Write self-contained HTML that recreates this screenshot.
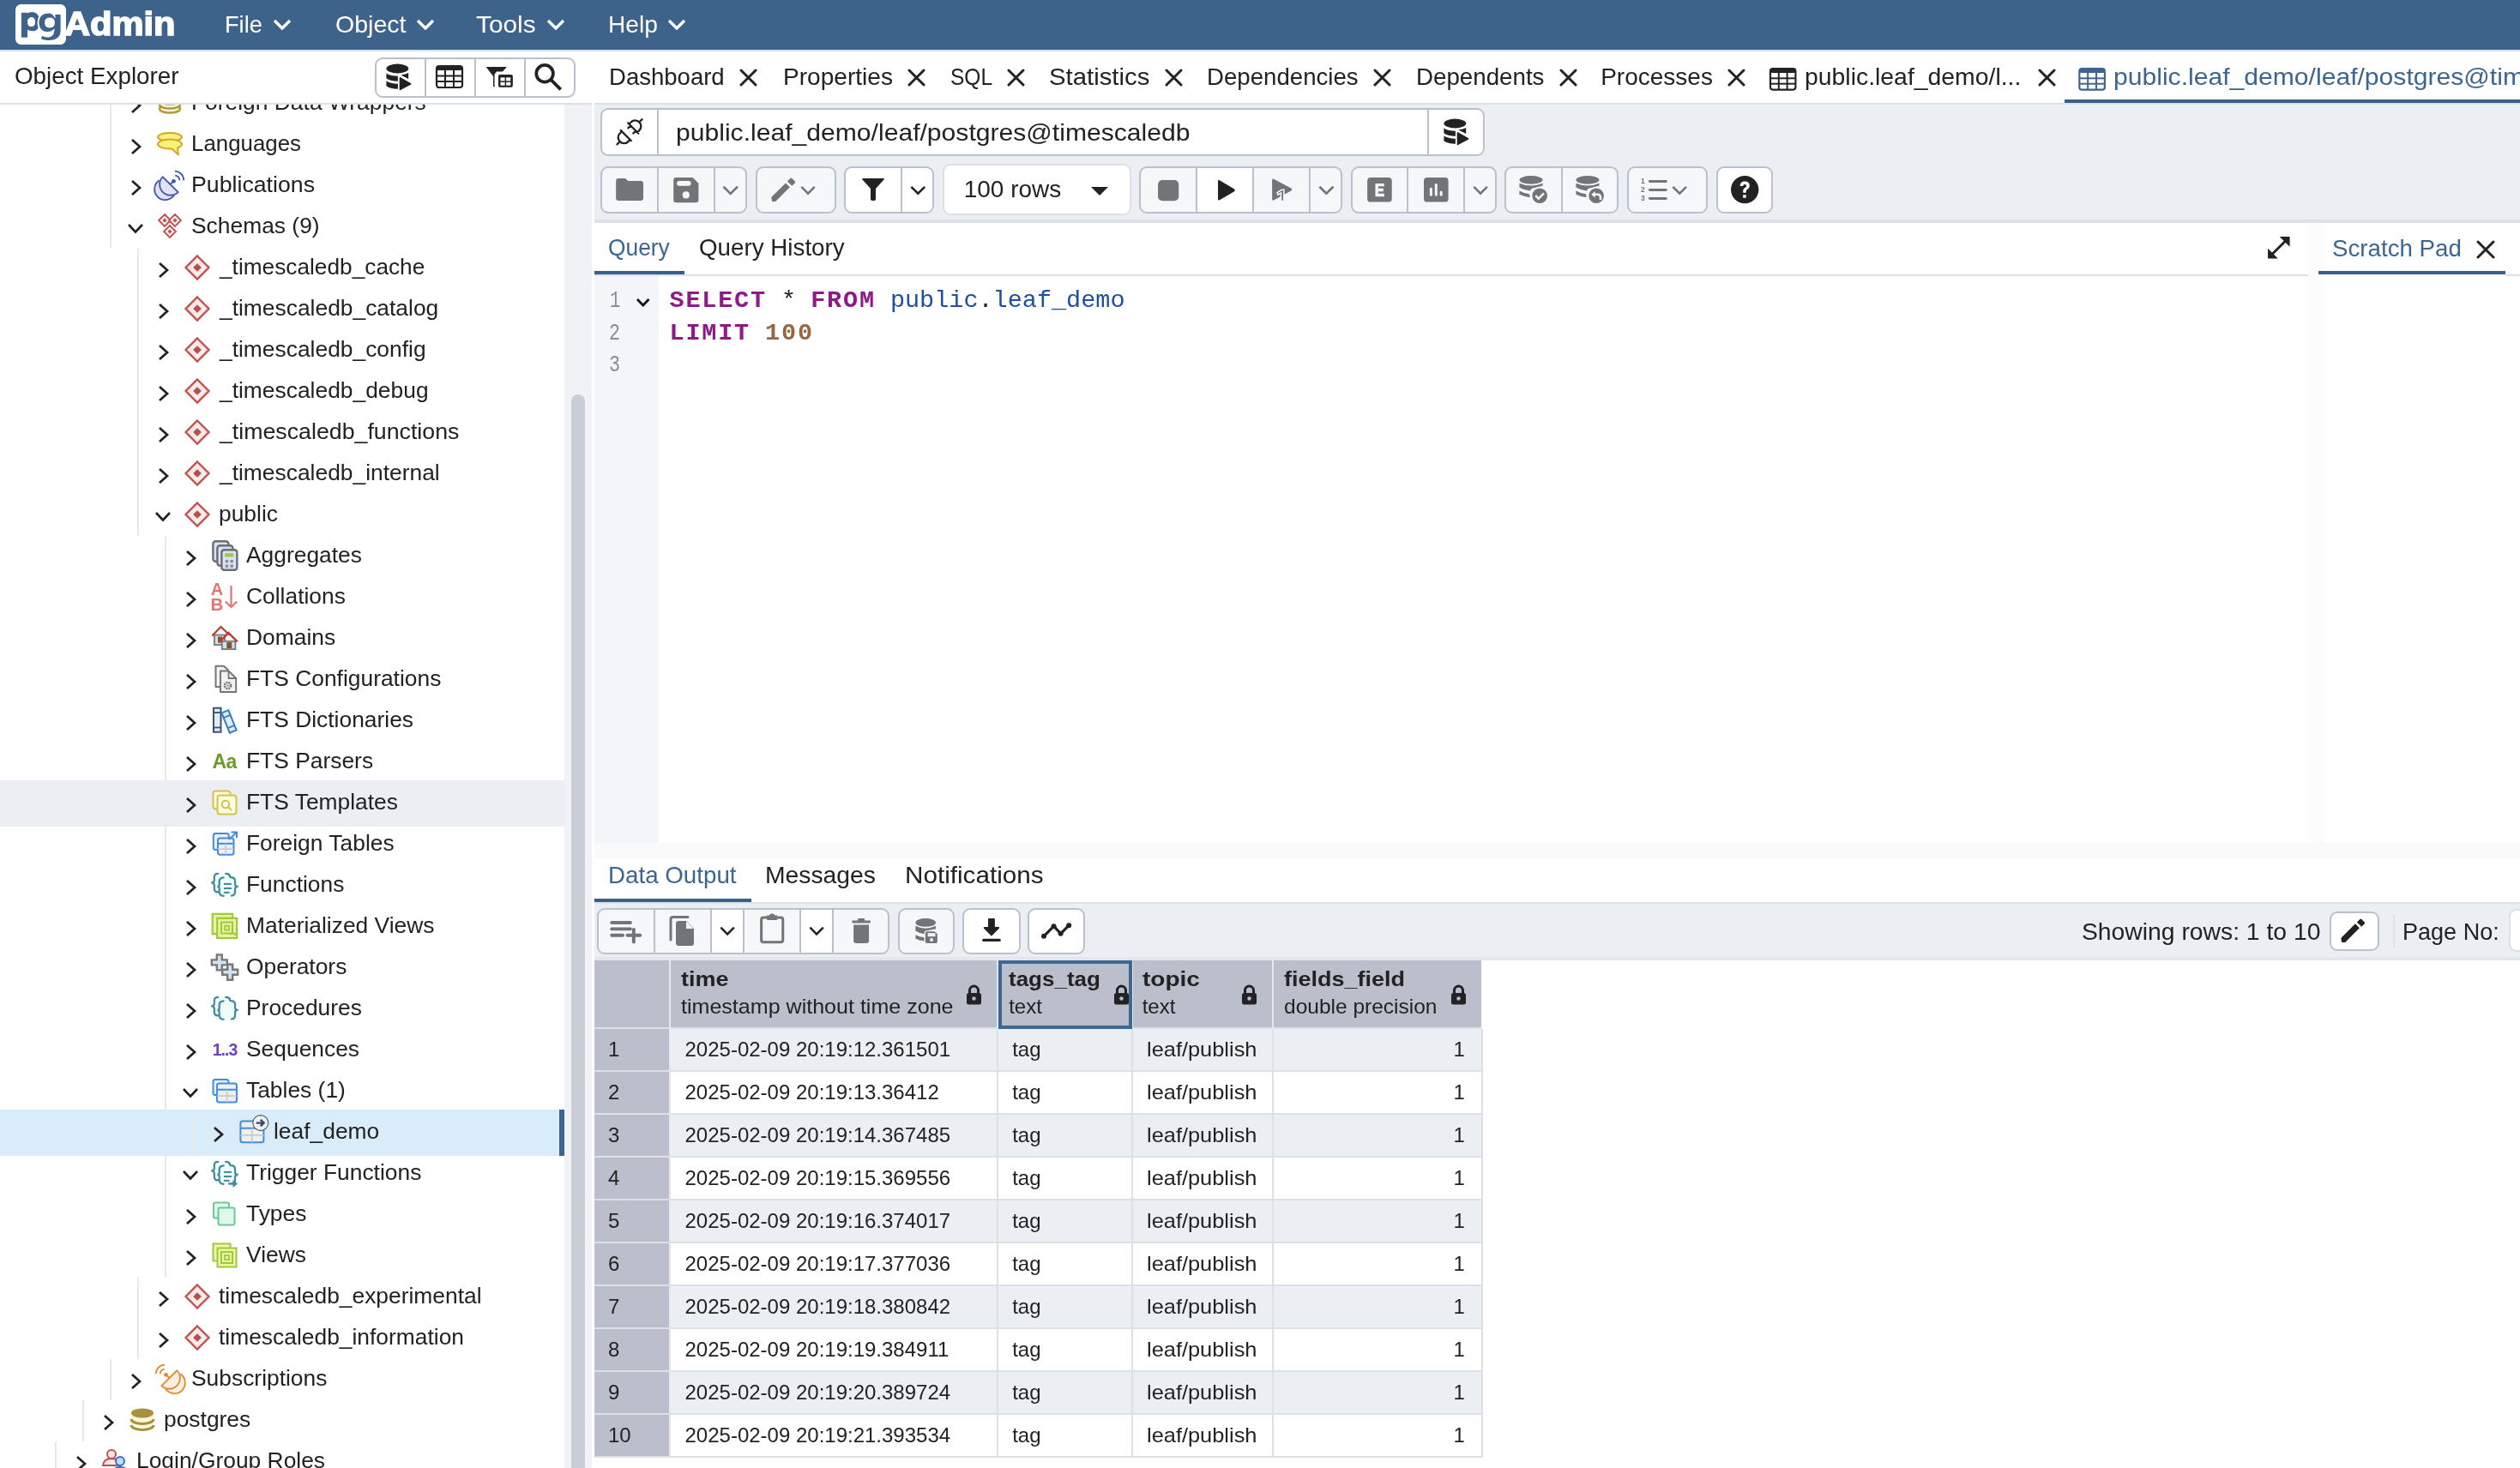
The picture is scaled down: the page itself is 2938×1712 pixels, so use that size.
<!DOCTYPE html>
<html><head><meta charset="utf-8"><title>pgAdmin 4</title>
<style>
html,body{margin:0;padding:0;}
body{width:2938px;height:1712px;overflow:hidden;position:relative;background:#fff;font-family:"Liberation Sans", sans-serif;}
#root{position:absolute;left:0;top:0;width:2938px;height:1712px;will-change:transform;}
#root>div,#root>span,#root>svg{position:absolute;}
.t{white-space:pre;display:block;}
</style></head><body><div id="root">
<div style="left:127.80000000000001px;top:97.00000000000001px;width:2px;height:48px;background:#e6e8ee;"></div>
<svg style="left:152.3px;top:112.60000000000001px;" width="13" height="20" viewBox="0 0 13 20"><polyline points="2,2 11,10.0 2,18" fill="none" stroke="#222222" stroke-width="2.7" stroke-linecap="butt" stroke-linejoin="miter"/></svg>
<svg style="left:183px;top:105.10000000000001px;overflow:visible;" width="30" height="30" viewBox="0 0 30 30"><ellipse cx="15" cy="22" rx="12" ry="4.5" fill="#fbf8d8" stroke="#b29b3e" stroke-width="2.6"/><ellipse cx="15" cy="17" rx="12" ry="4.5" fill="#fbf8d8" stroke="#b29b3e" stroke-width="2.6"/><ellipse cx="15" cy="12" rx="12" ry="4.5" fill="#fbf8d8" stroke="#b29b3e" stroke-width="2.6"/></svg>
<span class="t" style="left:223.00px;top:105.27px;font-size:26px;line-height:29.042px;color:#222222;font-weight:400;font-family:'Liberation Sans', sans-serif;transform:scaleX(1.0150);transform-origin:0 0;">Foreign Data Wrappers</span>
<div style="left:127.80000000000001px;top:145.0px;width:2px;height:48px;background:#e6e8ee;"></div>
<svg style="left:152.3px;top:160.60000000000002px;" width="13" height="20" viewBox="0 0 13 20"><polyline points="2,2 11,10.0 2,18" fill="none" stroke="#222222" stroke-width="2.7" stroke-linecap="butt" stroke-linejoin="miter"/></svg>
<svg style="left:183px;top:153.10000000000002px;overflow:visible;" width="30" height="30" viewBox="0 0 30 30"><ellipse cx="15" cy="6.8" rx="14" ry="4.8" fill="#f7f37a" stroke="#d6a526" stroke-width="2"/><path d="M1,15 A14,5.5 0 0 1 29,15 A14,5.5 0 0 1 24,19.3 L25,27.5 L17.5,20.5 Q16,20.5 15,20.5 A14,5.5 0 0 1 1,15z" fill="#f7f37a" stroke="#d6a526" stroke-width="2" stroke-linejoin="round"/></svg>
<span class="t" style="left:223.00px;top:153.27px;font-size:26px;line-height:29.042px;color:#222222;font-weight:400;font-family:'Liberation Sans', sans-serif;transform:scaleX(0.9946);transform-origin:0 0;">Languages</span>
<div style="left:127.80000000000001px;top:193.0px;width:2px;height:48px;background:#e6e8ee;"></div>
<svg style="left:152.3px;top:208.60000000000002px;" width="13" height="20" viewBox="0 0 13 20"><polyline points="2,2 11,10.0 2,18" fill="none" stroke="#222222" stroke-width="2.7" stroke-linecap="butt" stroke-linejoin="miter"/></svg>
<svg style="left:183px;top:201.10000000000002px;overflow:visible;" width="30" height="30" viewBox="0 0 30 30"><path d="M2.6,9.3 A12.5,12.5 0 1 0 20.1,26.5 L6.6,5.25z" fill="#dfe3f3" stroke="none"/><path d="M2.6,9.3 A12.5,12.5 0 1 0 20.1,26.5" fill="none" stroke="#3f54b3" stroke-width="1.8"/><path d="M6.6,5.25 L24.7,23.2 A12.75,12.75 0 0 1 6.6,5.25 Z" fill="#dfe3f3" stroke="#3f54b3" stroke-width="1.8" stroke-linejoin="round"/><line x1="15.4" y1="14" x2="19.5" y2="10.2" stroke="#3f54b3" stroke-width="1.8"/><circle cx="19.5" cy="10.3" r="2.4" fill="#3f54b3"/><path d="M21.2,3.6 A6,6 0 0 1 26.3,9.3" fill="none" stroke="#3f54b3" stroke-width="1.8"/><path d="M20.9,-1.3 A10.5,10.5 0 0 1 31.2,9.3" fill="none" stroke="#3f54b3" stroke-width="1.8"/></svg>
<span class="t" style="left:223.00px;top:201.27px;font-size:26px;line-height:29.042px;color:#222222;font-weight:400;font-family:'Liberation Sans', sans-serif;transform:scaleX(1.0275);transform-origin:0 0;">Publications</span>
<div style="left:127.80000000000001px;top:241.0px;width:2px;height:48px;background:#e6e8ee;"></div>
<svg style="left:147.8px;top:260.05px;" width="20" height="12.5" viewBox="0 0 20 12.5"><polyline points="2,2 10.0,10.5 18,2" fill="none" stroke="#222222" stroke-width="2.6" stroke-linecap="butt" stroke-linejoin="miter"/></svg>
<svg style="left:183px;top:249.10000000000002px;overflow:visible;" width="30" height="30" viewBox="0 0 30 30"><path d="M9,1 L16,8 L9,15 L2,8z" fill="#fbeaea" stroke="#c0504d" stroke-width="1.8"/><path d="M9,5.48 L11.52,8 L9,10.52 L6.48,8z" fill="#b5504c"/><path d="M21,1 L28,8 L21,15 L14,8z" fill="#fbeaea" stroke="#c0504d" stroke-width="1.8"/><path d="M21,5.48 L23.52,8 L21,10.52 L18.48,8z" fill="#b5504c"/><path d="M15,14 L22,21 L15,28 L8,21z" fill="#fbeaea" stroke="#c0504d" stroke-width="1.8"/><path d="M15,18.48 L17.52,21 L15,23.52 L12.48,21z" fill="#b5504c"/></svg>
<span class="t" style="left:223.00px;top:249.27px;font-size:26px;line-height:29.042px;color:#222222;font-weight:400;font-family:'Liberation Sans', sans-serif;transform:scaleX(1.0150);transform-origin:0 0;">Schemas (9)</span>
<div style="left:159.8px;top:289.0px;width:2px;height:48px;background:#e6e8ee;"></div>
<svg style="left:184.3px;top:304.6px;" width="13" height="20" viewBox="0 0 13 20"><polyline points="2,2 11,10.0 2,18" fill="none" stroke="#222222" stroke-width="2.7" stroke-linecap="butt" stroke-linejoin="miter"/></svg>
<svg style="left:215px;top:297.1px;overflow:visible;" width="30" height="30" viewBox="0 0 30 30"><path d="M15,1.5 L28.5,15 L15,28.5 L1.5,15z" fill="#fbeaea" stroke="#c0504d" stroke-width="2.3"/><path d="M15,10.14 L19.86,15 L15,19.86 L10.14,15z" fill="#b5504c"/></svg>
<span class="t" style="left:255.53px;top:297.27px;font-size:26px;line-height:29.042px;color:#222222;font-weight:400;font-family:'Liberation Sans', sans-serif;transform:scaleX(1.0096);transform-origin:0 0;">_timescaledb_cache</span>
<div style="left:159.8px;top:337.0px;width:2px;height:48px;background:#e6e8ee;"></div>
<svg style="left:184.3px;top:352.6px;" width="13" height="20" viewBox="0 0 13 20"><polyline points="2,2 11,10.0 2,18" fill="none" stroke="#222222" stroke-width="2.7" stroke-linecap="butt" stroke-linejoin="miter"/></svg>
<svg style="left:215px;top:345.1px;overflow:visible;" width="30" height="30" viewBox="0 0 30 30"><path d="M15,1.5 L28.5,15 L15,28.5 L1.5,15z" fill="#fbeaea" stroke="#c0504d" stroke-width="2.3"/><path d="M15,10.14 L19.86,15 L15,19.86 L10.14,15z" fill="#b5504c"/></svg>
<span class="t" style="left:255.53px;top:345.27px;font-size:26px;line-height:29.042px;color:#222222;font-weight:400;font-family:'Liberation Sans', sans-serif;transform:scaleX(1.0150);transform-origin:0 0;">_timescaledb_catalog</span>
<div style="left:159.8px;top:385.0px;width:2px;height:48px;background:#e6e8ee;"></div>
<svg style="left:184.3px;top:400.6px;" width="13" height="20" viewBox="0 0 13 20"><polyline points="2,2 11,10.0 2,18" fill="none" stroke="#222222" stroke-width="2.7" stroke-linecap="butt" stroke-linejoin="miter"/></svg>
<svg style="left:215px;top:393.1px;overflow:visible;" width="30" height="30" viewBox="0 0 30 30"><path d="M15,1.5 L28.5,15 L15,28.5 L1.5,15z" fill="#fbeaea" stroke="#c0504d" stroke-width="2.3"/><path d="M15,10.14 L19.86,15 L15,19.86 L10.14,15z" fill="#b5504c"/></svg>
<span class="t" style="left:255.53px;top:393.27px;font-size:26px;line-height:29.042px;color:#222222;font-weight:400;font-family:'Liberation Sans', sans-serif;transform:scaleX(1.0150);transform-origin:0 0;">_timescaledb_config</span>
<div style="left:159.8px;top:433.0px;width:2px;height:48px;background:#e6e8ee;"></div>
<svg style="left:184.3px;top:448.6px;" width="13" height="20" viewBox="0 0 13 20"><polyline points="2,2 11,10.0 2,18" fill="none" stroke="#222222" stroke-width="2.7" stroke-linecap="butt" stroke-linejoin="miter"/></svg>
<svg style="left:215px;top:441.1px;overflow:visible;" width="30" height="30" viewBox="0 0 30 30"><path d="M15,1.5 L28.5,15 L15,28.5 L1.5,15z" fill="#fbeaea" stroke="#c0504d" stroke-width="2.3"/><path d="M15,10.14 L19.86,15 L15,19.86 L10.14,15z" fill="#b5504c"/></svg>
<span class="t" style="left:255.53px;top:441.27px;font-size:26px;line-height:29.042px;color:#222222;font-weight:400;font-family:'Liberation Sans', sans-serif;transform:scaleX(1.0150);transform-origin:0 0;">_timescaledb_debug</span>
<div style="left:159.8px;top:480.99999999999994px;width:2px;height:48px;background:#e6e8ee;"></div>
<svg style="left:184.3px;top:496.59999999999997px;" width="13" height="20" viewBox="0 0 13 20"><polyline points="2,2 11,10.0 2,18" fill="none" stroke="#222222" stroke-width="2.7" stroke-linecap="butt" stroke-linejoin="miter"/></svg>
<svg style="left:215px;top:489.09999999999997px;overflow:visible;" width="30" height="30" viewBox="0 0 30 30"><path d="M15,1.5 L28.5,15 L15,28.5 L1.5,15z" fill="#fbeaea" stroke="#c0504d" stroke-width="2.3"/><path d="M15,10.14 L19.86,15 L15,19.86 L10.14,15z" fill="#b5504c"/></svg>
<span class="t" style="left:255.53px;top:489.27px;font-size:26px;line-height:29.042px;color:#222222;font-weight:400;font-family:'Liberation Sans', sans-serif;transform:scaleX(1.0282);transform-origin:0 0;">_timescaledb_functions</span>
<div style="left:159.8px;top:529.0px;width:2px;height:48px;background:#e6e8ee;"></div>
<svg style="left:184.3px;top:544.5999999999999px;" width="13" height="20" viewBox="0 0 13 20"><polyline points="2,2 11,10.0 2,18" fill="none" stroke="#222222" stroke-width="2.7" stroke-linecap="butt" stroke-linejoin="miter"/></svg>
<svg style="left:215px;top:537.0999999999999px;overflow:visible;" width="30" height="30" viewBox="0 0 30 30"><path d="M15,1.5 L28.5,15 L15,28.5 L1.5,15z" fill="#fbeaea" stroke="#c0504d" stroke-width="2.3"/><path d="M15,10.14 L19.86,15 L15,19.86 L10.14,15z" fill="#b5504c"/></svg>
<span class="t" style="left:255.53px;top:537.27px;font-size:26px;line-height:29.042px;color:#222222;font-weight:400;font-family:'Liberation Sans', sans-serif;transform:scaleX(1.0150);transform-origin:0 0;">_timescaledb_internal</span>
<div style="left:159.8px;top:577.0px;width:2px;height:48px;background:#e6e8ee;"></div>
<svg style="left:179.8px;top:596.05px;" width="20" height="12.5" viewBox="0 0 20 12.5"><polyline points="2,2 10.0,10.5 18,2" fill="none" stroke="#222222" stroke-width="2.6" stroke-linecap="butt" stroke-linejoin="miter"/></svg>
<svg style="left:215px;top:585.0999999999999px;overflow:visible;" width="30" height="30" viewBox="0 0 30 30"><path d="M15,1.5 L28.5,15 L15,28.5 L1.5,15z" fill="#fbeaea" stroke="#c0504d" stroke-width="2.3"/><path d="M15,10.14 L19.86,15 L15,19.86 L10.14,15z" fill="#b5504c"/></svg>
<span class="t" style="left:255.00px;top:585.27px;font-size:26px;line-height:29.042px;color:#222222;font-weight:400;font-family:'Liberation Sans', sans-serif;transform:scaleX(1.0150);transform-origin:0 0;">public</span>
<div style="left:191.8px;top:625.0px;width:2px;height:48px;background:#e6e8ee;"></div>
<svg style="left:216.3px;top:640.5999999999999px;" width="13" height="20" viewBox="0 0 13 20"><polyline points="2,2 11,10.0 2,18" fill="none" stroke="#222222" stroke-width="2.7" stroke-linecap="butt" stroke-linejoin="miter"/></svg>
<svg style="left:247px;top:633.0999999999999px;overflow:visible;" width="30" height="30" viewBox="0 0 30 30"><rect x="1.4" y="-1.7" width="18" height="23.5" rx="3" fill="#d5e5f7" stroke="#6d6d6d" stroke-width="2.4"/><rect x="6.4" y="3.3" width="18" height="23.5" rx="3" fill="#d5e5f7" stroke="#6d6d6d" stroke-width="2.4"/><rect x="11.4" y="8.3" width="18" height="23.5" rx="3" fill="#d5e5f7" stroke="#6d6d6d" stroke-width="2.4"/><rect x="15.2" y="12.1" width="10" height="4.4" fill="#a5c54a"/><rect x="15.8" y="20" width="3.4" height="3.2" fill="#8a8a8a"/><rect x="21.5" y="20" width="3.4" height="3.2" fill="#8a8a8a"/><rect x="15.8" y="25.5" width="3.4" height="3.2" fill="#8a8a8a"/><rect x="21.5" y="25.5" width="3.4" height="3.2" fill="#8a8a8a"/></svg>
<span class="t" style="left:287.00px;top:633.27px;font-size:26px;line-height:29.042px;color:#222222;font-weight:400;font-family:'Liberation Sans', sans-serif;transform:scaleX(1.0150);transform-origin:0 0;">Aggregates</span>
<div style="left:191.8px;top:673.0px;width:2px;height:48px;background:#e6e8ee;"></div>
<svg style="left:216.3px;top:688.5999999999999px;" width="13" height="20" viewBox="0 0 13 20"><polyline points="2,2 11,10.0 2,18" fill="none" stroke="#222222" stroke-width="2.7" stroke-linecap="butt" stroke-linejoin="miter"/></svg>
<svg style="left:247px;top:681.0999999999999px;overflow:visible;" width="30" height="30" viewBox="0 0 30 30"><text x="6" y="12.9" font-family="Liberation Sans" font-weight="700" font-size="20" fill="#e07777" text-anchor="middle">A</text><text x="6" y="30.8" font-family="Liberation Sans" font-weight="700" font-size="20.5" fill="#e07777" text-anchor="middle">B</text><path d="M22.5,2 V27 M15.8,20.5 L22.5,27 L29.2,20.5" fill="none" stroke="#e07777" stroke-width="2.2"/></svg>
<span class="t" style="left:287.00px;top:681.27px;font-size:26px;line-height:29.042px;color:#222222;font-weight:400;font-family:'Liberation Sans', sans-serif;transform:scaleX(1.0150);transform-origin:0 0;">Collations</span>
<div style="left:191.8px;top:721.0px;width:2px;height:48px;background:#e6e8ee;"></div>
<svg style="left:216.3px;top:736.5999999999999px;" width="13" height="20" viewBox="0 0 13 20"><polyline points="2,2 11,10.0 2,18" fill="none" stroke="#222222" stroke-width="2.7" stroke-linecap="butt" stroke-linejoin="miter"/></svg>
<svg style="left:247px;top:729.0999999999999px;overflow:visible;" width="30" height="30" viewBox="0 0 30 30"><rect x="3" y="11.5" width="12" height="11.5" fill="#cfe0f0" stroke="#777" stroke-width="1.8"/><rect x="7" y="13.5" width="5" height="7" fill="#7d5a2b"/><path d="M0.3,12.5 L10.5,2 L20.5,11.5" fill="none" stroke="#c0392b" stroke-width="2.2"/><rect x="11.8" y="18.8" width="15.6" height="9.3" fill="#cfe0f0" stroke="#777" stroke-width="1.8"/><rect x="17.3" y="20" width="6" height="7" fill="#7d5a2b"/><path d="M8.8,20 L19.3,9 L29.8,19.3" fill="none" stroke="#c0392b" stroke-width="2.4"/></svg>
<span class="t" style="left:287.00px;top:729.27px;font-size:26px;line-height:29.042px;color:#222222;font-weight:400;font-family:'Liberation Sans', sans-serif;transform:scaleX(1.0150);transform-origin:0 0;">Domains</span>
<div style="left:191.8px;top:769.0px;width:2px;height:48px;background:#e6e8ee;"></div>
<svg style="left:216.3px;top:784.5999999999999px;" width="13" height="20" viewBox="0 0 13 20"><polyline points="2,2 11,10.0 2,18" fill="none" stroke="#222222" stroke-width="2.7" stroke-linecap="butt" stroke-linejoin="miter"/></svg>
<svg style="left:247px;top:777.0999999999999px;overflow:visible;" width="30" height="30" viewBox="0 0 30 30"><path d="M4.5,-0.3 H14 L19,4.5 V24 H4.5z" fill="#f2f2f2" stroke="#777" stroke-width="2" stroke-linejoin="round"/><path d="M10,5.5 H19.5 L28.2,14 V30 H10z" fill="#f2f2f2" stroke="#777" stroke-width="2" stroke-linejoin="round"/><path d="M19.5,5.5 V14 H28.2" fill="none" stroke="#777" stroke-width="1.8"/><circle cx="18.5" cy="22.5" r="3.6" fill="none" stroke="#777" stroke-width="2.6" stroke-dasharray="1.9 1"/><circle cx="18.5" cy="22.5" r="1.1" fill="#777"/></svg>
<span class="t" style="left:287.00px;top:777.27px;font-size:26px;line-height:29.042px;color:#222222;font-weight:400;font-family:'Liberation Sans', sans-serif;transform:scaleX(1.0150);transform-origin:0 0;">FTS Configurations</span>
<div style="left:191.8px;top:817.0px;width:2px;height:48px;background:#e6e8ee;"></div>
<svg style="left:216.3px;top:832.5999999999999px;" width="13" height="20" viewBox="0 0 13 20"><polyline points="2,2 11,10.0 2,18" fill="none" stroke="#222222" stroke-width="2.7" stroke-linecap="butt" stroke-linejoin="miter"/></svg>
<svg style="left:247px;top:825.0999999999999px;overflow:visible;" width="30" height="30" viewBox="0 0 30 30"><rect x="2" y="0.7" width="8.5" height="28" fill="#ddeefa" stroke="#3d5170" stroke-width="2"/><line x1="2" y1="6" x2="10.5" y2="6" stroke="#3d5170" stroke-width="1.8"/><line x1="2" y1="23.5" x2="10.5" y2="23.5" stroke="#3d5170" stroke-width="1.8"/><g transform="rotate(-22 20 17)"><rect x="16" y="4" width="8.5" height="25" fill="#ddeefa" stroke="#3a7dc4" stroke-width="2"/><line x1="16" y1="10" x2="24.5" y2="10" stroke="#3a7dc4" stroke-width="1.8"/><line x1="16" y1="23" x2="24.5" y2="23" stroke="#3a7dc4" stroke-width="1.8"/></g></svg>
<span class="t" style="left:287.00px;top:825.27px;font-size:26px;line-height:29.042px;color:#222222;font-weight:400;font-family:'Liberation Sans', sans-serif;transform:scaleX(1.0150);transform-origin:0 0;">FTS Dictionaries</span>
<div style="left:191.8px;top:865.0px;width:2px;height:48px;background:#e6e8ee;"></div>
<svg style="left:216.3px;top:880.5999999999999px;" width="13" height="20" viewBox="0 0 13 20"><polyline points="2,2 11,10.0 2,18" fill="none" stroke="#222222" stroke-width="2.7" stroke-linecap="butt" stroke-linejoin="miter"/></svg>
<svg style="left:247px;top:873.0999999999999px;overflow:visible;" width="30" height="30" viewBox="0 0 30 30"><text x="14.5" y="22.8" font-family="Liberation Sans" font-weight="700" font-size="23" fill="#6a9a2a" text-anchor="middle" letter-spacing="-0.8">Aa</text></svg>
<span class="t" style="left:287.00px;top:873.27px;font-size:26px;line-height:29.042px;color:#222222;font-weight:400;font-family:'Liberation Sans', sans-serif;transform:scaleX(1.0150);transform-origin:0 0;">FTS Parsers</span>
<div style="left:191.8px;top:913.0px;width:2px;height:48px;background:#e6e8ee;"></div>
<div style="left:0px;top:909.8px;width:658px;height:54px;background:#ebeef3;"></div>
<svg style="left:216.3px;top:928.5999999999999px;" width="13" height="20" viewBox="0 0 13 20"><polyline points="2,2 11,10.0 2,18" fill="none" stroke="#222222" stroke-width="2.7" stroke-linecap="butt" stroke-linejoin="miter"/></svg>
<svg style="left:247px;top:921.0999999999999px;overflow:visible;" width="30" height="30" viewBox="0 0 30 30"><rect x="1.5" y="1.5" width="20" height="21" rx="3" fill="#fdfddf" stroke="#d3c24b" stroke-width="2"/><rect x="6.5" y="6.5" width="22" height="22" rx="3" fill="#fdfddf" stroke="#d3c24b" stroke-width="2"/><circle cx="16" cy="17" r="4.2" fill="none" stroke="#d3c24b" stroke-width="2"/><line x1="19" y1="20" x2="23" y2="24" stroke="#d3c24b" stroke-width="2"/></svg>
<span class="t" style="left:287.00px;top:921.27px;font-size:26px;line-height:29.042px;color:#222222;font-weight:400;font-family:'Liberation Sans', sans-serif;transform:scaleX(1.0150);transform-origin:0 0;">FTS Templates</span>
<div style="left:191.8px;top:961.0px;width:2px;height:48px;background:#e6e8ee;"></div>
<svg style="left:216.3px;top:976.5999999999999px;" width="13" height="20" viewBox="0 0 13 20"><polyline points="2,2 11,10.0 2,18" fill="none" stroke="#222222" stroke-width="2.7" stroke-linecap="butt" stroke-linejoin="miter"/></svg>
<svg style="left:247px;top:969.0999999999999px;overflow:visible;" width="30" height="30" viewBox="0 0 30 30"><rect x="1.8" y="3" width="18" height="19" rx="2.5" fill="#efefef" stroke="#3e8de0" stroke-width="2"/><rect x="7" y="8.5" width="18.5" height="19.2" rx="2.5" fill="#efefef" stroke="#3e8de0" stroke-width="2"/><line x1="7" y1="14.836" x2="25.5" y2="14.836" stroke="#3e8de0" stroke-width="2"/><line x1="7" y1="21.172" x2="25.5" y2="21.172" stroke="#c3c8d0" stroke-width="1.6"/><line x1="16.25" y1="14.836" x2="16.25" y2="27.7" stroke="#c3c8d0" stroke-width="1.6"/><path d="M20,10 L29,1.5 M22.5,1.5 h6.5 v6.5" fill="none" stroke="#3e8de0" stroke-width="2"/></svg>
<span class="t" style="left:287.00px;top:969.27px;font-size:26px;line-height:29.042px;color:#222222;font-weight:400;font-family:'Liberation Sans', sans-serif;transform:scaleX(1.0150);transform-origin:0 0;">Foreign Tables</span>
<div style="left:191.8px;top:1009.0px;width:2px;height:48px;background:#e6e8ee;"></div>
<svg style="left:216.3px;top:1024.6px;" width="13" height="20" viewBox="0 0 13 20"><polyline points="2,2 11,10.0 2,18" fill="none" stroke="#222222" stroke-width="2.7" stroke-linecap="butt" stroke-linejoin="miter"/></svg>
<svg style="left:247px;top:1017.0999999999999px;overflow:visible;" width="30" height="30" viewBox="0 0 30 30"><rect x="4" y="3" width="23" height="25" rx="4" fill="#effcfc"/><path d="M7.2,1.9 Q2.8,1.9 2.8,6.300000000000001 V10.0 Q2.8,12.5 -0.9000000000000004,12.5 Q2.8,12.5 2.8,15.0 V19.0 Q2.8,23.4 7.2,23.4" fill="none" stroke="#3f8a9c" stroke-width="2.2" stroke-linecap="round"/><path d="M16.2,1.9 Q21.2,1.9 21.2,6" fill="none" stroke="#3f8a9c" stroke-width="2.2" stroke-linecap="round"/><path d="M13.7,6.3 Q8.7,6.3 8.7,11.3 V14.399999999999999 Q8.7,16.9 6.3999999999999995,16.9 Q8.7,16.9 8.7,19.4 V22.8 Q8.7,27.8 13.7,27.8" fill="none" stroke="#3f8a9c" stroke-width="2.2" stroke-linecap="round"/><path d="M22.700000000000003,6.3 Q27.1,6.3 27.1,10.7 V14.399999999999999 Q27.1,16.9 30.700000000000003,16.9 Q27.1,16.9 27.1,19.4 V23.1 Q27.1,27.5 22.700000000000003,27.5" fill="none" stroke="#3f8a9c" stroke-width="2.2" stroke-linecap="round"/><line x1="14" y1="13.9" x2="22.9" y2="13.9" stroke="#3f8a9c" stroke-width="2"/><line x1="14" y1="19" x2="22.9" y2="19" stroke="#3f8a9c" stroke-width="2"/><line x1="14" y1="23.9" x2="20.6" y2="23.9" stroke="#3f8a9c" stroke-width="2"/></svg>
<span class="t" style="left:287.00px;top:1017.27px;font-size:26px;line-height:29.042px;color:#222222;font-weight:400;font-family:'Liberation Sans', sans-serif;transform:scaleX(1.0150);transform-origin:0 0;">Functions</span>
<div style="left:191.8px;top:1057.0px;width:2px;height:48px;background:#e6e8ee;"></div>
<svg style="left:216.3px;top:1072.6px;" width="13" height="20" viewBox="0 0 13 20"><polyline points="2,2 11,10.0 2,18" fill="none" stroke="#222222" stroke-width="2.7" stroke-linecap="butt" stroke-linejoin="miter"/></svg>
<svg style="left:247px;top:1065.1px;overflow:visible;" width="30" height="30" viewBox="0 0 30 30"><rect x="0.7" y="0.8" width="23.5" height="23.5" fill="#e4f79c" stroke="#a3c53f" stroke-width="2.2"/><rect x="6.2" y="5.8" width="23" height="23.2" fill="#e4f79c" stroke="#a3c53f" stroke-width="2.2"/><rect x="11" y="10.5" width="13" height="13" fill="none" stroke="#a3c53f" stroke-width="2"/><rect x="15.2" y="14.8" width="4.8" height="4.8" fill="none" stroke="#a3c53f" stroke-width="1.8"/><path d="M21,25 l3,-3 l3,3 l2.5,-2.5" fill="none" stroke="#a3c53f" stroke-width="1.8"/></svg>
<span class="t" style="left:287.00px;top:1065.27px;font-size:26px;line-height:29.042px;color:#222222;font-weight:400;font-family:'Liberation Sans', sans-serif;transform:scaleX(1.0150);transform-origin:0 0;">Materialized Views</span>
<div style="left:191.8px;top:1105.0px;width:2px;height:48px;background:#e6e8ee;"></div>
<svg style="left:216.3px;top:1120.6px;" width="13" height="20" viewBox="0 0 13 20"><polyline points="2,2 11,10.0 2,18" fill="none" stroke="#222222" stroke-width="2.7" stroke-linecap="butt" stroke-linejoin="miter"/></svg>
<svg style="left:247px;top:1113.1px;overflow:visible;" width="30" height="30" viewBox="0 0 30 30"><path d="M7,1 h6 v6 h6 v6 h-6 v6 h-6 v-6 h-6 v-6 h6z" fill="#d5e2f3" stroke="#777" stroke-width="2.4" transform="translate(-1.2,-0.6)"/><path d="M7,1 h6 v6 h6 v6 h-6 v6 h-6 v-6 h-6 v-6 h6z" fill="#d5e2f3" stroke="#777" stroke-width="2.4" transform="translate(11.2,10.8)"/></svg>
<span class="t" style="left:287.00px;top:1113.27px;font-size:26px;line-height:29.042px;color:#222222;font-weight:400;font-family:'Liberation Sans', sans-serif;transform:scaleX(1.0150);transform-origin:0 0;">Operators</span>
<div style="left:191.8px;top:1153.0px;width:2px;height:48px;background:#e6e8ee;"></div>
<svg style="left:216.3px;top:1168.6px;" width="13" height="20" viewBox="0 0 13 20"><polyline points="2,2 11,10.0 2,18" fill="none" stroke="#222222" stroke-width="2.7" stroke-linecap="butt" stroke-linejoin="miter"/></svg>
<svg style="left:247px;top:1161.1px;overflow:visible;" width="30" height="30" viewBox="0 0 30 30"><rect x="4" y="3" width="23" height="25" rx="4" fill="#effcfc"/><path d="M7.2,1.9 Q2.8,1.9 2.8,6.300000000000001 V10.0 Q2.8,12.5 -0.9000000000000004,12.5 Q2.8,12.5 2.8,15.0 V19.0 Q2.8,23.4 7.2,23.4" fill="none" stroke="#3f8a9c" stroke-width="2.2" stroke-linecap="round"/><path d="M16.2,1.9 Q21.2,1.9 21.2,6" fill="none" stroke="#3f8a9c" stroke-width="2.2" stroke-linecap="round"/><path d="M13.7,6.3 Q8.7,6.3 8.7,11.3 V14.399999999999999 Q8.7,16.9 6.3999999999999995,16.9 Q8.7,16.9 8.7,19.4 V22.8 Q8.7,27.8 13.7,27.8" fill="none" stroke="#3f8a9c" stroke-width="2.2" stroke-linecap="round"/><path d="M22.700000000000003,6.3 Q27.1,6.3 27.1,10.7 V14.399999999999999 Q27.1,16.9 30.700000000000003,16.9 Q27.1,16.9 27.1,19.4 V23.1 Q27.1,27.5 22.700000000000003,27.5" fill="none" stroke="#3f8a9c" stroke-width="2.2" stroke-linecap="round"/></svg>
<span class="t" style="left:287.00px;top:1161.27px;font-size:26px;line-height:29.042px;color:#222222;font-weight:400;font-family:'Liberation Sans', sans-serif;transform:scaleX(1.0150);transform-origin:0 0;">Procedures</span>
<div style="left:191.8px;top:1201.0px;width:2px;height:48px;background:#e6e8ee;"></div>
<svg style="left:216.3px;top:1216.6px;" width="13" height="20" viewBox="0 0 13 20"><polyline points="2,2 11,10.0 2,18" fill="none" stroke="#222222" stroke-width="2.7" stroke-linecap="butt" stroke-linejoin="miter"/></svg>
<svg style="left:247px;top:1209.1px;overflow:visible;" width="30" height="30" viewBox="0 0 30 30"><text x="15" y="21.8" font-family="Liberation Sans" font-weight="700" font-size="19.5" fill="#6f42c1" text-anchor="middle" letter-spacing="-1">1..3</text></svg>
<span class="t" style="left:287.00px;top:1209.27px;font-size:26px;line-height:29.042px;color:#222222;font-weight:400;font-family:'Liberation Sans', sans-serif;transform:scaleX(1.0150);transform-origin:0 0;">Sequences</span>
<div style="left:191.8px;top:1249.0px;width:2px;height:48px;background:#e6e8ee;"></div>
<svg style="left:211.8px;top:1268.05px;" width="20" height="12.5" viewBox="0 0 20 12.5"><polyline points="2,2 10.0,10.5 18,2" fill="none" stroke="#222222" stroke-width="2.6" stroke-linecap="butt" stroke-linejoin="miter"/></svg>
<svg style="left:247px;top:1257.1px;overflow:visible;" width="30" height="30" viewBox="0 0 30 30"><rect x="1.5" y="2" width="18" height="18" rx="2.5" fill="#efefef" stroke="#3e8de0" stroke-width="2"/><rect x="6" y="6.5" width="23" height="22" rx="2.5" fill="#efefef" stroke="#3e8de0" stroke-width="2"/><line x1="6" y1="13.760000000000002" x2="29" y2="13.760000000000002" stroke="#3e8de0" stroke-width="2"/><line x1="6" y1="21.020000000000003" x2="29" y2="21.020000000000003" stroke="#c3c8d0" stroke-width="1.6"/><line x1="17.5" y1="13.760000000000002" x2="17.5" y2="28.5" stroke="#c3c8d0" stroke-width="1.6"/></svg>
<span class="t" style="left:287.00px;top:1257.27px;font-size:26px;line-height:29.042px;color:#222222;font-weight:400;font-family:'Liberation Sans', sans-serif;transform:scaleX(1.0150);transform-origin:0 0;">Tables (1)</span>
<div style="left:223.8px;top:1297.0px;width:2px;height:48px;background:#e6e8ee;"></div>
<div style="left:0px;top:1293.8px;width:652px;height:54px;background:#d9ecf9;"></div>
<div style="left:652px;top:1293.8px;width:6px;height:54px;background:#3d6590;"></div>
<div style="left:223.8px;top:1297.0px;width:2px;height:48px;background:#e6e8ee;"></div>
<svg style="left:248.3px;top:1312.6px;" width="13" height="20" viewBox="0 0 13 20"><polyline points="2,2 11,10.0 2,18" fill="none" stroke="#222222" stroke-width="2.7" stroke-linecap="butt" stroke-linejoin="miter"/></svg>
<svg style="left:279px;top:1305.1px;overflow:visible;" width="30" height="30" viewBox="0 0 30 30"><rect x="1.4" y="2.6" width="27" height="24.6" rx="2.5" fill="#efefef" stroke="#3e8de0" stroke-width="2"/><line x1="1.4" y1="10.718" x2="28.4" y2="10.718" stroke="#3e8de0" stroke-width="2"/><line x1="1.4" y1="18.836000000000002" x2="28.4" y2="18.836000000000002" stroke="#c3c8d0" stroke-width="1.6"/><line x1="14.9" y1="10.718" x2="14.9" y2="27.200000000000003" stroke="#c3c8d0" stroke-width="1.6"/><circle cx="24.8" cy="4.6" r="9" fill="#efefef" stroke="#4a5a70" stroke-width="1.1"/><path d="M19.8,4.6 h8.5 M24.8,0.8 L28.6,4.6 L24.8,8.4" fill="none" stroke="#34496a" stroke-width="2.4"/></svg>
<span class="t" style="left:319.00px;top:1305.27px;font-size:26px;line-height:29.042px;color:#222222;font-weight:400;font-family:'Liberation Sans', sans-serif;transform:scaleX(1.0150);transform-origin:0 0;">leaf_demo</span>
<div style="left:191.8px;top:1345.0px;width:2px;height:48px;background:#e6e8ee;"></div>
<svg style="left:211.8px;top:1364.05px;" width="20" height="12.5" viewBox="0 0 20 12.5"><polyline points="2,2 10.0,10.5 18,2" fill="none" stroke="#222222" stroke-width="2.6" stroke-linecap="butt" stroke-linejoin="miter"/></svg>
<svg style="left:247px;top:1353.1px;overflow:visible;" width="30" height="30" viewBox="0 0 30 30"><rect x="4" y="3" width="23" height="25" rx="4" fill="#effcfc"/><path d="M7.2,1.9 Q2.8,1.9 2.8,6.300000000000001 V10.0 Q2.8,12.5 -0.9000000000000004,12.5 Q2.8,12.5 2.8,15.0 V19.0 Q2.8,23.4 7.2,23.4" fill="none" stroke="#3f8a9c" stroke-width="2.2" stroke-linecap="round"/><path d="M16.2,1.9 Q21.2,1.9 21.2,6" fill="none" stroke="#3f8a9c" stroke-width="2.2" stroke-linecap="round"/><path d="M13.7,6.3 Q8.7,6.3 8.7,11.3 V14.399999999999999 Q8.7,16.9 6.3999999999999995,16.9 Q8.7,16.9 8.7,19.4 V22.8 Q8.7,27.8 13.7,27.8" fill="none" stroke="#3f8a9c" stroke-width="2.2" stroke-linecap="round"/><path d="M22.700000000000003,6.3 Q27.1,6.3 27.1,10.7 V14.399999999999999 Q27.1,16.9 30.700000000000003,16.9 Q27.1,16.9 27.1,19.4 V23.1 Q27.1,27.5 22.700000000000003,27.5" fill="none" stroke="#3f8a9c" stroke-width="2.2" stroke-linecap="round"/><line x1="14" y1="13.9" x2="22.9" y2="13.9" stroke="#3f8a9c" stroke-width="2"/><line x1="14" y1="19" x2="22.9" y2="19" stroke="#3f8a9c" stroke-width="2"/><line x1="14" y1="23.9" x2="20.6" y2="23.9" stroke="#3f8a9c" stroke-width="2"/><path d="M19,27.5 h6" stroke="#3f8a9c" stroke-width="2.2"/><path d="M24.5,23 L30,27.5 L24.5,32z" fill="#3f8a9c"/></svg>
<span class="t" style="left:287.00px;top:1353.27px;font-size:26px;line-height:29.042px;color:#222222;font-weight:400;font-family:'Liberation Sans', sans-serif;transform:scaleX(1.0150);transform-origin:0 0;">Trigger Functions</span>
<div style="left:191.8px;top:1393.0px;width:2px;height:48px;background:#e6e8ee;"></div>
<svg style="left:216.3px;top:1408.6px;" width="13" height="20" viewBox="0 0 13 20"><polyline points="2,2 11,10.0 2,18" fill="none" stroke="#222222" stroke-width="2.7" stroke-linecap="butt" stroke-linejoin="miter"/></svg>
<svg style="left:247px;top:1401.1px;overflow:visible;" width="30" height="30" viewBox="0 0 30 30"><rect x="2" y="1.5" width="18" height="18" rx="2" fill="#e0f8ea" stroke="#6cc79a" stroke-width="2"/><rect x="7.5" y="7.5" width="19" height="20" rx="2" fill="#e0f8ea" stroke="#6cc79a" stroke-width="2"/></svg>
<span class="t" style="left:287.00px;top:1401.27px;font-size:26px;line-height:29.042px;color:#222222;font-weight:400;font-family:'Liberation Sans', sans-serif;transform:scaleX(1.0150);transform-origin:0 0;">Types</span>
<div style="left:191.8px;top:1441.0px;width:2px;height:48px;background:#e6e8ee;"></div>
<svg style="left:216.3px;top:1456.6px;" width="13" height="20" viewBox="0 0 13 20"><polyline points="2,2 11,10.0 2,18" fill="none" stroke="#222222" stroke-width="2.7" stroke-linecap="butt" stroke-linejoin="miter"/></svg>
<svg style="left:247px;top:1449.1px;overflow:visible;" width="30" height="30" viewBox="0 0 30 30"><rect x="1.5" y="1.5" width="20" height="20" fill="#e8fba4" stroke="#a3c53f" stroke-width="2"/><rect x="6.5" y="6.5" width="22" height="22" fill="#e8fba4" stroke="#a3c53f" stroke-width="2"/><rect x="11" y="11" width="13" height="13" fill="none" stroke="#a3c53f" stroke-width="2"/><rect x="15" y="15" width="5" height="5" fill="none" stroke="#a3c53f" stroke-width="1.8"/></svg>
<span class="t" style="left:287.00px;top:1449.27px;font-size:26px;line-height:29.042px;color:#222222;font-weight:400;font-family:'Liberation Sans', sans-serif;transform:scaleX(1.0150);transform-origin:0 0;">Views</span>
<div style="left:159.8px;top:1489.0px;width:2px;height:48px;background:#e6e8ee;"></div>
<svg style="left:184.3px;top:1504.6px;" width="13" height="20" viewBox="0 0 13 20"><polyline points="2,2 11,10.0 2,18" fill="none" stroke="#222222" stroke-width="2.7" stroke-linecap="butt" stroke-linejoin="miter"/></svg>
<svg style="left:215px;top:1497.1px;overflow:visible;" width="30" height="30" viewBox="0 0 30 30"><path d="M15,1.5 L28.5,15 L15,28.5 L1.5,15z" fill="#fbeaea" stroke="#c0504d" stroke-width="2.3"/><path d="M15,10.14 L19.86,15 L15,19.86 L10.14,15z" fill="#b5504c"/></svg>
<span class="t" style="left:255.00px;top:1497.27px;font-size:26px;line-height:29.042px;color:#222222;font-weight:400;font-family:'Liberation Sans', sans-serif;transform:scaleX(1.0150);transform-origin:0 0;">timescaledb_experimental</span>
<div style="left:159.8px;top:1537.0px;width:2px;height:48px;background:#e6e8ee;"></div>
<svg style="left:184.3px;top:1552.6px;" width="13" height="20" viewBox="0 0 13 20"><polyline points="2,2 11,10.0 2,18" fill="none" stroke="#222222" stroke-width="2.7" stroke-linecap="butt" stroke-linejoin="miter"/></svg>
<svg style="left:215px;top:1545.1px;overflow:visible;" width="30" height="30" viewBox="0 0 30 30"><path d="M15,1.5 L28.5,15 L15,28.5 L1.5,15z" fill="#fbeaea" stroke="#c0504d" stroke-width="2.3"/><path d="M15,10.14 L19.86,15 L15,19.86 L10.14,15z" fill="#b5504c"/></svg>
<span class="t" style="left:255.00px;top:1545.27px;font-size:26px;line-height:29.042px;color:#222222;font-weight:400;font-family:'Liberation Sans', sans-serif;transform:scaleX(1.0150);transform-origin:0 0;">timescaledb_information</span>
<div style="left:127.80000000000001px;top:1585.0px;width:2px;height:48px;background:#e6e8ee;"></div>
<svg style="left:152.3px;top:1600.6px;" width="13" height="20" viewBox="0 0 13 20"><polyline points="2,2 11,10.0 2,18" fill="none" stroke="#222222" stroke-width="2.7" stroke-linecap="butt" stroke-linejoin="miter"/></svg>
<svg style="left:183px;top:1593.1px;overflow:visible;" width="30" height="30" viewBox="0 0 30 30"><g transform="translate(30,0) scale(-1,1)"><path d="M2.6,9.3 A12.5,12.5 0 1 0 20.1,26.5 L6.6,5.25z" fill="#fbeee2" stroke="none"/><path d="M2.6,9.3 A12.5,12.5 0 1 0 20.1,26.5" fill="none" stroke="#e08a2c" stroke-width="1.8"/><path d="M6.6,5.25 L24.7,23.2 A12.75,12.75 0 0 1 6.6,5.25 Z" fill="#fbeee2" stroke="#e08a2c" stroke-width="1.8" stroke-linejoin="round"/><line x1="15.4" y1="14" x2="19.5" y2="10.2" stroke="#e08a2c" stroke-width="1.8"/><circle cx="19.5" cy="10.3" r="2.4" fill="#e08a2c"/><path d="M21.2,3.6 A6,6 0 0 1 26.3,9.3" fill="none" stroke="#e08a2c" stroke-width="1.8"/><path d="M20.9,-1.3 A10.5,10.5 0 0 1 31.2,9.3" fill="none" stroke="#e08a2c" stroke-width="1.8"/></g></svg>
<span class="t" style="left:223.00px;top:1593.27px;font-size:26px;line-height:29.042px;color:#222222;font-weight:400;font-family:'Liberation Sans', sans-serif;transform:scaleX(1.0150);transform-origin:0 0;">Subscriptions</span>
<div style="left:95.80000000000001px;top:1633.0px;width:2px;height:48px;background:#e6e8ee;"></div>
<svg style="left:120.30000000000001px;top:1648.6px;" width="13" height="20" viewBox="0 0 13 20"><polyline points="2,2 11,10.0 2,18" fill="none" stroke="#222222" stroke-width="2.7" stroke-linecap="butt" stroke-linejoin="miter"/></svg>
<svg style="left:151px;top:1641.1px;overflow:visible;" width="30" height="30" viewBox="0 0 30 30"><rect x="2" y="7" width="26" height="16" fill="#f9f7d4"/><ellipse cx="15" cy="7" rx="13" ry="5.5" fill="#a6923e"/><path d="M2,14 a13,5.5 0 0 0 26,0" fill="none" stroke="#a6923e" stroke-width="3"/><path d="M2,21 a13,5.5 0 0 0 26,0" fill="none" stroke="#a6923e" stroke-width="3"/></svg>
<span class="t" style="left:191.00px;top:1641.27px;font-size:26px;line-height:29.042px;color:#222222;font-weight:400;font-family:'Liberation Sans', sans-serif;transform:scaleX(1.0150);transform-origin:0 0;">postgres</span>
<div style="left:63.80000000000001px;top:1681.0px;width:2px;height:48px;background:#e6e8ee;"></div>
<svg style="left:88.30000000000001px;top:1696.6px;" width="13" height="20" viewBox="0 0 13 20"><polyline points="2,2 11,10.0 2,18" fill="none" stroke="#222222" stroke-width="2.7" stroke-linecap="butt" stroke-linejoin="miter"/></svg>
<svg style="left:119px;top:1689.1px;overflow:visible;" width="30" height="30" viewBox="0 0 30 30"><circle cx="11" cy="7" r="5" fill="#fbeaea" stroke="#c0504d" stroke-width="2"/><path d="M1,20 q1,-8 10,-8 q9,0 10,8z" fill="#fbeaea" stroke="#c0504d" stroke-width="2"/><circle cx="21" cy="15" r="5" fill="#c5dcf0" stroke="#3a6fc4" stroke-width="2"/><path d="M11,30 q1,-8 10,-8 q9,0 10,8z" fill="#c5dcf0" stroke="#3a6fc4" stroke-width="2"/></svg>
<span class="t" style="left:159.00px;top:1689.27px;font-size:26px;line-height:29.042px;color:#222222;font-weight:400;font-family:'Liberation Sans', sans-serif;transform:scaleX(1.0150);transform-origin:0 0;">Login/Group Roles</span>
<div style="left:0px;top:0px;width:2938px;height:58px;background:#3e638b;"></div>
<div style="left:0px;top:58px;width:2938px;height:2px;background:#dde0e6;"></div>
<svg style="left:0px;top:0px;" width="80" height="58" viewBox="0 0 80 58"><rect x="18" y="5" width="59" height="47" rx="6.5" fill="#fff"/><path d="M24.9,14.8 H32 V43.7 H24.9z" fill="#3e638b"/><path d="M31,16 Q33.5,14 38,14 Q46,14.5 46,25.2 Q46,36.2 38,36.2 Q34,36.2 31,34z M36.5,20 Q32,20.5 32,25.5 Q32,31 36.5,31 Q41,31 41,25.5 Q41,20 36.5,20z" fill="#3e638b" fill-rule="evenodd"/><path d="M57,14.5 Q45,14.5 44.5,26.5 Q45,38 55.5,38 Q60,38 62.5,35.5 Q62,42 56.5,42.5 Q52,42.8 49,40.5 L46.5,45.5 Q51,48.2 57,48 Q71.5,47.5 71.5,36 V16 H63.5 V18.5 Q61,14.5 57,14.5z M58,21.5 Q53,21.5 53,26.5 Q53,31.5 58,31.5 Q63,31.5 63,26.5 Q63,21.5 58,21.5z" fill="#3e638b" fill-rule="evenodd" stroke="#fff" stroke-width="1.8"/></svg>
<span class="t" style="left:75.00px;top:5.76px;font-size:38.5px;line-height:43.005px;color:#fff;font-weight:700;font-family:'Liberation Sans', sans-serif;transform:scaleX(1.0816);transform-origin:0 0;-webkit-text-stroke:1.6px #fff;">Admin</span>
<span class="t" style="left:261.70px;top:12.86px;font-size:28px;line-height:31.276px;color:#fff;font-weight:400;font-family:'Liberation Sans', sans-serif;transform:scaleX(0.9716);transform-origin:0 0;">File</span>
<svg style="left:317.5px;top:21.7px;" width="22" height="13" viewBox="0 0 22 13"><polyline points="2,2 11.0,11 20,2" fill="none" stroke="#fff" stroke-width="3.4" stroke-linecap="butt" stroke-linejoin="miter"/></svg>
<span class="t" style="left:390.80px;top:12.86px;font-size:28px;line-height:31.276px;color:#fff;font-weight:400;font-family:'Liberation Sans', sans-serif;transform:scaleX(1.0195);transform-origin:0 0;">Object</span>
<svg style="left:484.5px;top:21.7px;" width="22" height="13" viewBox="0 0 22 13"><polyline points="2,2 11.0,11 20,2" fill="none" stroke="#fff" stroke-width="3.4" stroke-linecap="butt" stroke-linejoin="miter"/></svg>
<span class="t" style="left:555.40px;top:12.86px;font-size:28px;line-height:31.276px;color:#fff;font-weight:400;font-family:'Liberation Sans', sans-serif;transform:scaleX(1.0645);transform-origin:0 0;">Tools</span>
<svg style="left:637.0px;top:21.7px;" width="22" height="13" viewBox="0 0 22 13"><polyline points="2,2 11.0,11 20,2" fill="none" stroke="#fff" stroke-width="3.4" stroke-linecap="butt" stroke-linejoin="miter"/></svg>
<span class="t" style="left:708.60px;top:12.86px;font-size:28px;line-height:31.276px;color:#fff;font-weight:400;font-family:'Liberation Sans', sans-serif;transform:scaleX(1.0045);transform-origin:0 0;">Help</span>
<svg style="left:777.6px;top:21.7px;" width="22" height="13" viewBox="0 0 22 13"><polyline points="2,2 11.0,11 20,2" fill="none" stroke="#fff" stroke-width="3.4" stroke-linecap="butt" stroke-linejoin="miter"/></svg>
<div style="left:0px;top:60px;width:690px;height:60px;background:#fff;"></div>
<span class="t" style="left:17.00px;top:72.66px;font-size:28px;line-height:31.276px;color:#222222;font-weight:400;font-family:'Liberation Sans', sans-serif;transform:scaleX(0.9926);transform-origin:0 0;">Object Explorer</span>
<div style="left:0px;top:120px;width:690px;height:2px;background:#dde0e6;"></div>
<div style="left:437px;top:66.5px;width:233.5px;height:47px;border:2px solid #bac1cd;border-radius:9px;background:#fff;box-sizing:border-box;"></div>
<div style="left:495px;top:67px;width:2px;height:46px;background:#bac1cd;"></div>
<div style="left:553px;top:67px;width:2px;height:46px;background:#bac1cd;"></div>
<div style="left:611px;top:67px;width:2px;height:46px;background:#bac1cd;"></div>
<div style="left:693px;top:60px;width:2245px;height:60px;background:#fff;"></div>
<div style="left:690px;top:60px;width:3px;height:1652px;background:#fff;"></div>
<div style="left:693px;top:120px;width:2245px;height:2px;background:#dde0e6;"></div>
<span class="t" style="left:710.00px;top:74.36px;font-size:28px;line-height:31.276px;color:#222222;font-weight:400;font-family:'Liberation Sans', sans-serif;transform:scaleX(0.9831);transform-origin:0 0;">Dashboard</span>
<svg style="left:862.3px;top:80px;" width="21.0" height="21" viewBox="0 0 21.0 21"><path d="M2,2 L19.0,19 M19.0,2 L2,19" stroke="#222222" stroke-width="3" stroke-linecap="round"/></svg>
<span class="t" style="left:912.60px;top:74.36px;font-size:28px;line-height:31.276px;color:#222222;font-weight:400;font-family:'Liberation Sans', sans-serif;transform:scaleX(1.0033);transform-origin:0 0;">Properties</span>
<svg style="left:1057.6px;top:80px;" width="21.0" height="21" viewBox="0 0 21.0 21"><path d="M2,2 L19.0,19 M19.0,2 L2,19" stroke="#222222" stroke-width="3" stroke-linecap="round"/></svg>
<span class="t" style="left:1107.90px;top:74.36px;font-size:28px;line-height:31.276px;color:#222222;font-weight:400;font-family:'Liberation Sans', sans-serif;transform:scaleX(0.8768);transform-origin:0 0;">SQL</span>
<svg style="left:1173.5px;top:80px;" width="21.0" height="21" viewBox="0 0 21.0 21"><path d="M2,2 L19.0,19 M19.0,2 L2,19" stroke="#222222" stroke-width="3" stroke-linecap="round"/></svg>
<span class="t" style="left:1223.20px;top:74.36px;font-size:28px;line-height:31.276px;color:#222222;font-weight:400;font-family:'Liberation Sans', sans-serif;transform:scaleX(1.0473);transform-origin:0 0;">Statistics</span>
<svg style="left:1358px;top:80px;" width="21" height="21" viewBox="0 0 21 21"><path d="M2,2 L19,19 M19,2 L2,19" stroke="#222222" stroke-width="3" stroke-linecap="round"/></svg>
<span class="t" style="left:1407.10px;top:74.36px;font-size:28px;line-height:31.276px;color:#222222;font-weight:400;font-family:'Liberation Sans', sans-serif;transform:scaleX(0.9868);transform-origin:0 0;">Dependencies</span>
<svg style="left:1601.4px;top:80px;" width="21.0" height="21" viewBox="0 0 21.0 21"><path d="M2,2 L19.0,19 M19.0,2 L2,19" stroke="#222222" stroke-width="3" stroke-linecap="round"/></svg>
<span class="t" style="left:1866.20px;top:74.36px;font-size:28px;line-height:31.276px;color:#222222;font-weight:400;font-family:'Liberation Sans', sans-serif;">Processes</span>
<svg style="left:2014.2px;top:80px;" width="21.0" height="21" viewBox="0 0 21.0 21"><path d="M2,2 L19.0,19 M19.0,2 L2,19" stroke="#222222" stroke-width="3" stroke-linecap="round"/></svg>
<span class="t" style="left:1650.70px;top:74.36px;font-size:28px;line-height:31.276px;color:#222222;font-weight:400;font-family:'Liberation Sans', sans-serif;transform:scaleX(0.9897);transform-origin:0 0;">Dependents</span>
<svg style="left:1817.8px;top:80px;" width="21.0" height="21" viewBox="0 0 21.0 21"><path d="M2,2 L19.0,19 M19.0,2 L2,19" stroke="#222222" stroke-width="3" stroke-linecap="round"/></svg>
<span class="t" style="left:2103.80px;top:74.36px;font-size:28px;line-height:31.276px;color:#222222;font-weight:400;font-family:'Liberation Sans', sans-serif;transform:scaleX(1.0134);transform-origin:0 0;">public.leaf_demo/l...</span>
<svg style="left:2375.8px;top:80px;" width="21.0" height="21" viewBox="0 0 21.0 21"><path d="M2,2 L19.0,19 M19.0,2 L2,19" stroke="#222222" stroke-width="3" stroke-linecap="round"/></svg>
<span class="t" style="left:2463.70px;top:74.36px;font-size:28px;line-height:31.276px;color:#3a6690;font-weight:400;font-family:'Liberation Sans', sans-serif;transform:scaleX(1.0751);transform-origin:0 0;">public.leaf_demo/leaf/postgres@timescaledb</span>
<div style="left:2407px;top:116px;width:531px;height:4px;background:#375f88;"></div>
<div style="left:693px;top:122px;width:2245px;height:134px;background:#ebeef3;"></div>
<div style="left:693px;top:256px;width:2245px;height:4px;background:#dde0e6;"></div>
<div style="left:700.3px;top:126.2px;width:1030.5px;height:55.5px;border:2px solid #bac1cd;border-radius:9px;background:#fff;box-sizing:border-box;"></div>
<div style="left:766px;top:127px;width:2px;height:54.5px;background:#bac1cd;"></div>
<div style="left:1664px;top:127px;width:2px;height:54.5px;background:#bac1cd;"></div>
<span class="t" style="left:787.60px;top:138.66px;font-size:28px;line-height:31.276px;color:#222222;font-weight:400;font-family:'Liberation Sans', sans-serif;transform:scaleX(1.0751);transform-origin:0 0;">public.leaf_demo/leaf/postgres@timescaledb</span>
<div style="left:700.3px;top:194px;width:170.70000000000005px;height:54.5px;border:2px solid #bac1cd;border-radius:9px;background:#f6f7f9;box-sizing:border-box;"></div>
<div style="left:766px;top:195px;width:2px;height:52.5px;background:#bac1cd;"></div>
<div style="left:832px;top:195px;width:2px;height:52.5px;background:#bac1cd;"></div>
<div style="left:880.5px;top:194px;width:94.5px;height:54.5px;border:2px solid #bac1cd;border-radius:9px;background:#f6f7f9;box-sizing:border-box;"></div>
<div style="left:984.4px;top:194px;width:104.30000000000007px;height:54.5px;border:2px solid #bac1cd;border-radius:9px;background:#fff;box-sizing:border-box;"></div>
<div style="left:1049.6px;top:195px;width:2px;height:52.5px;background:#bac1cd;"></div>
<div style="left:1099px;top:191px;width:220px;height:59.5px;border:2px solid #dde0e6;border-radius:9px;background:#fff;box-sizing:border-box;"></div>
<span class="t" style="left:1123.70px;top:204.56px;font-size:28px;line-height:31.276px;color:#222222;font-weight:400;font-family:'Liberation Sans', sans-serif;">100 rows</span>
<svg style="left:1272px;top:217.7px;" width="20" height="10" viewBox="0 0 20 10"><polygon points="0,0 20,0 10,10" fill="#222"/></svg>
<div style="left:1328.4px;top:194px;width:236.19999999999982px;height:54.5px;border:2px solid #bac1cd;border-radius:9px;background:#f6f7f9;box-sizing:border-box;"></div>
<div style="left:1395px;top:196px;width:66px;height:50.5px;background:#fff;"></div>
<div style="left:1394px;top:195px;width:2px;height:52.5px;background:#bac1cd;"></div>
<div style="left:1460px;top:195px;width:2px;height:52.5px;background:#bac1cd;"></div>
<div style="left:1525.5px;top:195px;width:2px;height:52.5px;background:#bac1cd;"></div>
<div style="left:1574.6px;top:194px;width:170.20000000000005px;height:54.5px;border:2px solid #bac1cd;border-radius:9px;background:#f6f7f9;box-sizing:border-box;"></div>
<div style="left:1639.8px;top:195px;width:2px;height:52.5px;background:#bac1cd;"></div>
<div style="left:1706px;top:195px;width:2px;height:52.5px;background:#bac1cd;"></div>
<div style="left:1754.3px;top:194px;width:132.70000000000005px;height:54.5px;border:2px solid #bac1cd;border-radius:9px;background:#f6f7f9;box-sizing:border-box;"></div>
<div style="left:1820px;top:195px;width:2px;height:52.5px;background:#bac1cd;"></div>
<div style="left:1896.6px;top:194px;width:94.80000000000018px;height:54.5px;border:2px solid #bac1cd;border-radius:9px;background:#f6f7f9;box-sizing:border-box;"></div>
<div style="left:2000.6px;top:194px;width:66.59999999999991px;height:54.5px;border:2px solid #bac1cd;border-radius:9px;background:#fff;box-sizing:border-box;"></div>
<div style="left:693px;top:260px;width:2245px;height:62px;background:#fff;"></div>
<span class="t" style="left:709.00px;top:272.86px;font-size:28px;line-height:31.276px;color:#3a6690;font-weight:400;font-family:'Liberation Sans', sans-serif;transform:scaleX(0.9410);transform-origin:0 0;">Query</span>
<span class="t" style="left:815.00px;top:272.86px;font-size:28px;line-height:31.276px;color:#222222;font-weight:400;font-family:'Liberation Sans', sans-serif;transform:scaleX(0.9913);transform-origin:0 0;">Query History</span>
<div style="left:693px;top:320px;width:2008px;height:2px;background:#dde0e6;"></div>
<div style="left:2921px;top:320px;width:17px;height:2px;background:#dde0e6;"></div>
<div style="left:693px;top:316px;width:105px;height:4px;background:#375f88;"></div>
<div style="left:2691px;top:260px;width:19px;height:730px;background:#fcfcfc;"></div>
<span class="t" style="left:2719.40px;top:274.06px;font-size:28px;line-height:31.276px;color:#3a6690;font-weight:400;font-family:'Liberation Sans', sans-serif;transform:scaleX(0.9891);transform-origin:0 0;">Scratch Pad</span>
<svg style="left:2887px;top:280px;" width="22" height="22" viewBox="0 0 22 22"><path d="M2,2 L20,20 M20,2 L2,20" stroke="#222222" stroke-width="3" stroke-linecap="round"/></svg>
<div style="left:2703px;top:316px;width:218px;height:4px;background:#375f88;"></div>
<div style="left:693px;top:322px;width:75px;height:668px;background:#f3f5f9;"></div>
<span class="t" style="left:711.00px;top:334.79px;font-size:28.5px;line-height:31.834px;color:#848ea0;font-weight:400;font-family:'Liberation Mono', monospace;transform:scaleX(0.7193);transform-origin:0 0;">1</span>
<span class="t" style="left:710.00px;top:372.59px;font-size:28.5px;line-height:31.834px;color:#848ea0;font-weight:400;font-family:'Liberation Mono', monospace;transform:scaleX(0.7602);transform-origin:0 0;">2</span>
<span class="t" style="left:710.00px;top:410.39px;font-size:28.5px;line-height:31.834px;color:#848ea0;font-weight:400;font-family:'Liberation Mono', monospace;transform:scaleX(0.7602);transform-origin:0 0;">3</span>
<svg style="left:741.25px;top:347.0px;" width="17.5" height="11" viewBox="0 0 17.5 11"><polyline points="2,2 8.75,9 15.5,2" fill="none" stroke="#111" stroke-width="2.8" stroke-linecap="butt" stroke-linejoin="miter"/></svg>
<span class="t" style="left:780.50px;top:334.79px;font-size:28.5px;line-height:31.834px;color:#8e1a87;font-weight:700;font-family:'Liberation Mono', monospace;letter-spacing:1.8px">SELECT</span>
<span class="t" style="left:911.00px;top:334.79px;font-size:28.5px;line-height:31.834px;color:#222;font-weight:400;font-family:'Liberation Mono', monospace;letter-spacing:0px">*</span>
<span class="t" style="left:945.20px;top:334.79px;font-size:28.5px;line-height:31.834px;color:#8e1a87;font-weight:700;font-family:'Liberation Mono', monospace;letter-spacing:1.8px">FROM</span>
<span class="t" style="left:1037.90px;top:334.79px;font-size:28.5px;line-height:31.834px;color:#1d4fa3;font-weight:400;font-family:'Liberation Mono', monospace;letter-spacing:0px">public</span>
<span class="t" style="left:1140.50px;top:334.79px;font-size:28.5px;line-height:31.834px;color:#222;font-weight:400;font-family:'Liberation Mono', monospace;letter-spacing:0px">.</span>
<span class="t" style="left:1157.60px;top:334.79px;font-size:28.5px;line-height:31.834px;color:#1d4fa3;font-weight:400;font-family:'Liberation Mono', monospace;letter-spacing:0px">leaf_demo</span>
<span class="t" style="left:780.50px;top:372.59px;font-size:28.5px;line-height:31.834px;color:#8e1a87;font-weight:700;font-family:'Liberation Mono', monospace;letter-spacing:1.8px">LIMIT</span>
<span class="t" style="left:892.10px;top:372.59px;font-size:28.5px;line-height:31.834px;color:#976743;font-weight:700;font-family:'Liberation Mono', monospace;letter-spacing:1.8px">100</span>
<div style="left:693px;top:983px;width:2245px;height:19px;background:#fafafa;"></div>
<span class="t" style="left:709.40px;top:1004.56px;font-size:28px;line-height:31.276px;color:#3a6690;font-weight:400;font-family:'Liberation Sans', sans-serif;transform:scaleX(0.9906);transform-origin:0 0;">Data Output</span>
<span class="t" style="left:892.00px;top:1004.56px;font-size:28px;line-height:31.276px;color:#222222;font-weight:400;font-family:'Liberation Sans', sans-serif;transform:scaleX(1.0103);transform-origin:0 0;">Messages</span>
<span class="t" style="left:1055.00px;top:1004.56px;font-size:28px;line-height:31.276px;color:#222222;font-weight:400;font-family:'Liberation Sans', sans-serif;transform:scaleX(1.0593);transform-origin:0 0;">Notifications</span>
<div style="left:693px;top:1048px;width:183px;height:4px;background:#375f88;"></div>
<div style="left:693px;top:1052px;width:2245px;height:2px;background:#dde0e6;"></div>
<div style="left:693px;top:1054px;width:2245px;height:62px;background:#ebeef3;"></div>
<div style="left:693px;top:1116px;width:2245px;height:4px;background:#e4e6eb;"></div>
<div style="left:696.2px;top:1058.9px;width:340.89999999999986px;height:54.09999999999991px;border:2px solid #bac1cd;border-radius:9px;background:#f6f7f9;box-sizing:border-box;"></div>
<div style="left:829px;top:1060.9px;width:38px;height:50.09999999999991px;background:#fff;"></div>
<div style="left:933px;top:1060.9px;width:38px;height:50.09999999999991px;background:#fff;"></div>
<div style="left:761.9px;top:1059.9px;width:2px;height:52.09999999999991px;background:#bac1cd;"></div>
<div style="left:827.9px;top:1059.9px;width:2px;height:52.09999999999991px;background:#bac1cd;"></div>
<div style="left:866.1px;top:1059.9px;width:2px;height:52.09999999999991px;background:#bac1cd;"></div>
<div style="left:931.9px;top:1059.9px;width:2px;height:52.09999999999991px;background:#bac1cd;"></div>
<div style="left:970.1px;top:1059.9px;width:2px;height:52.09999999999991px;background:#bac1cd;"></div>
<div style="left:1046.7px;top:1058.9px;width:66.59999999999991px;height:54.09999999999991px;border:2px solid #bac1cd;border-radius:9px;background:#f6f7f9;box-sizing:border-box;"></div>
<div style="left:1122.2px;top:1058.9px;width:67.39999999999986px;height:54.09999999999991px;border:2px solid #bac1cd;border-radius:9px;background:#fff;box-sizing:border-box;"></div>
<div style="left:1198.4px;top:1058.9px;width:66.59999999999991px;height:54.09999999999991px;border:2px solid #bac1cd;border-radius:9px;background:#fff;box-sizing:border-box;"></div>
<span class="t" style="left:2426.60px;top:1070.96px;font-size:28px;line-height:31.276px;color:#222222;font-weight:400;font-family:'Liberation Sans', sans-serif;transform:scaleX(1.0105);transform-origin:0 0;">Showing rows: 1 to 10</span>
<div style="left:2716px;top:1062.9px;width:58px;height:46.1px;border:2px solid #bac1cd;border-radius:9px;background:#fff;box-sizing:border-box;"></div>
<div style="left:2790px;top:1066.7px;width:2px;height:38.700000000000045px;background:#dde0e6;"></div>
<span class="t" style="left:2801.30px;top:1070.96px;font-size:28px;line-height:31.276px;color:#222222;font-weight:400;font-family:'Liberation Sans', sans-serif;transform:scaleX(0.9652);transform-origin:0 0;">Page No:</span>
<div style="left:2925.3px;top:1060px;width:40px;height:50px;border:2px solid #dde0e6;border-radius:9px;background:#fff;box-sizing:border-box;"></div>
<div style="left:693px;top:1120px;width:87px;height:580px;background:#babfcb;"></div>
<div style="left:780px;top:1120px;width:2px;height:580px;background:#e6e8ec;"></div>
<div style="left:782px;top:1120px;width:945px;height:78px;background:#babfcb;"></div>
<div style="left:693px;top:1198px;width:1034px;height:2px;background:#dde0e6;"></div>
<div style="left:1162px;top:1120px;width:2px;height:580px;background:#e6e8ec;"></div>
<div style="left:1319px;top:1120px;width:2px;height:580px;background:#e6e8ec;"></div>
<div style="left:1483px;top:1120px;width:2px;height:580px;background:#e6e8ec;"></div>
<span class="t" style="left:793.90px;top:1129.28px;font-size:24px;line-height:26.808px;color:#222222;font-weight:700;font-family:'Liberation Sans', sans-serif;transform:scaleX(1.1253);transform-origin:0 0;">time</span>
<span class="t" style="left:793.90px;top:1160.98px;font-size:24px;line-height:26.808px;color:#222222;font-weight:400;font-family:'Liberation Sans', sans-serif;transform:scaleX(1.0441);transform-origin:0 0;">timestamp without time zone</span>
<svg style="left:1126.2px;top:1147.5px;" width="19" height="24" viewBox="0 0 19 24"><path d="M4.5,10 V7 a5,5 0 0 1 10,0 V10" fill="none" stroke="#222" stroke-width="3"/><rect x="1" y="10" width="17" height="13.5" rx="2.5" fill="#222"/><circle cx="9.5" cy="16.5" r="2.2" fill="#babfcb"/></svg>
<span class="t" style="left:1176.20px;top:1129.28px;font-size:24px;line-height:26.808px;color:#222222;font-weight:700;font-family:'Liberation Sans', sans-serif;transform:scaleX(1.0834);transform-origin:0 0;">tags_tag</span>
<span class="t" style="left:1176.20px;top:1160.98px;font-size:24px;line-height:26.808px;color:#222222;font-weight:400;font-family:'Liberation Sans', sans-serif;">text</span>
<svg style="left:1298.4px;top:1147.5px;" width="19" height="24" viewBox="0 0 19 24"><path d="M4.5,10 V7 a5,5 0 0 1 10,0 V10" fill="none" stroke="#222" stroke-width="3"/><rect x="1" y="10" width="17" height="13.5" rx="2.5" fill="#222"/><circle cx="9.5" cy="16.5" r="2.2" fill="#babfcb"/></svg>
<span class="t" style="left:1331.70px;top:1129.28px;font-size:24px;line-height:26.808px;color:#222222;font-weight:700;font-family:'Liberation Sans', sans-serif;transform:scaleX(1.1681);transform-origin:0 0;">topic</span>
<span class="t" style="left:1331.70px;top:1160.98px;font-size:24px;line-height:26.808px;color:#222222;font-weight:400;font-family:'Liberation Sans', sans-serif;">text</span>
<svg style="left:1446.8px;top:1147.5px;" width="19" height="24" viewBox="0 0 19 24"><path d="M4.5,10 V7 a5,5 0 0 1 10,0 V10" fill="none" stroke="#222" stroke-width="3"/><rect x="1" y="10" width="17" height="13.5" rx="2.5" fill="#222"/><circle cx="9.5" cy="16.5" r="2.2" fill="#babfcb"/></svg>
<span class="t" style="left:1497.30px;top:1129.28px;font-size:24px;line-height:26.808px;color:#222222;font-weight:700;font-family:'Liberation Sans', sans-serif;transform:scaleX(1.1244);transform-origin:0 0;">fields_field</span>
<span class="t" style="left:1497.30px;top:1160.98px;font-size:24px;line-height:26.808px;color:#222222;font-weight:400;font-family:'Liberation Sans', sans-serif;transform:scaleX(1.0209);transform-origin:0 0;">double precision</span>
<svg style="left:1690.7px;top:1147.5px;" width="19" height="24" viewBox="0 0 19 24"><path d="M4.5,10 V7 a5,5 0 0 1 10,0 V10" fill="none" stroke="#222" stroke-width="3"/><rect x="1" y="10" width="17" height="13.5" rx="2.5" fill="#222"/><circle cx="9.5" cy="16.5" r="2.2" fill="#babfcb"/></svg>
<div style="left:1164px;top:1120px;width:155.8px;height:80px;border:4px solid #3e6791;box-sizing:border-box;"></div>
<div style="left:782px;top:1200px;width:945px;height:48px;background:#ebeef3;"></div>
<div style="left:693px;top:1248px;width:1034px;height:2px;background:#dde0e6;"></div>
<div style="left:1162px;top:1200px;width:2px;height:48px;background:#dde0e6;"></div>
<div style="left:1319px;top:1200px;width:2px;height:48px;background:#dde0e6;"></div>
<div style="left:1483px;top:1200px;width:2px;height:48px;background:#dde0e6;"></div>
<div style="left:1727px;top:1200px;width:2px;height:50px;background:#dde0e6;"></div>
<span class="t" style="left:709.00px;top:1211.28px;font-size:24px;line-height:26.808px;color:#222222;font-weight:400;font-family:'Liberation Sans', sans-serif;">1</span>
<span class="t" style="left:798.50px;top:1211.28px;font-size:24px;line-height:26.808px;color:#222222;font-weight:400;font-family:'Liberation Sans', sans-serif;">2025-02-09 20:19:12.361501</span>
<span class="t" style="left:1180.20px;top:1211.28px;font-size:24px;line-height:26.808px;color:#222222;font-weight:400;font-family:'Liberation Sans', sans-serif;">tag</span>
<span class="t" style="left:1336.50px;top:1211.28px;font-size:24px;line-height:26.808px;color:#222222;font-weight:400;font-family:'Liberation Sans', sans-serif;transform:scaleX(1.0581);transform-origin:0 0;">leaf/publish</span>
<span class="t" style="left:1694.50px;top:1211.28px;font-size:24px;line-height:26.808px;color:#222222;font-weight:400;font-family:'Liberation Sans', sans-serif;">1</span>
<div style="left:782px;top:1250px;width:945px;height:48px;background:#fff;"></div>
<div style="left:693px;top:1298px;width:1034px;height:2px;background:#dde0e6;"></div>
<div style="left:1162px;top:1250px;width:2px;height:48px;background:#dde0e6;"></div>
<div style="left:1319px;top:1250px;width:2px;height:48px;background:#dde0e6;"></div>
<div style="left:1483px;top:1250px;width:2px;height:48px;background:#dde0e6;"></div>
<div style="left:1727px;top:1250px;width:2px;height:50px;background:#dde0e6;"></div>
<span class="t" style="left:709.00px;top:1261.28px;font-size:24px;line-height:26.808px;color:#222222;font-weight:400;font-family:'Liberation Sans', sans-serif;">2</span>
<span class="t" style="left:798.50px;top:1261.28px;font-size:24px;line-height:26.808px;color:#222222;font-weight:400;font-family:'Liberation Sans', sans-serif;">2025-02-09 20:19:13.36412</span>
<span class="t" style="left:1180.20px;top:1261.28px;font-size:24px;line-height:26.808px;color:#222222;font-weight:400;font-family:'Liberation Sans', sans-serif;">tag</span>
<span class="t" style="left:1336.50px;top:1261.28px;font-size:24px;line-height:26.808px;color:#222222;font-weight:400;font-family:'Liberation Sans', sans-serif;transform:scaleX(1.0581);transform-origin:0 0;">leaf/publish</span>
<span class="t" style="left:1694.50px;top:1261.28px;font-size:24px;line-height:26.808px;color:#222222;font-weight:400;font-family:'Liberation Sans', sans-serif;">1</span>
<div style="left:782px;top:1300px;width:945px;height:48px;background:#ebeef3;"></div>
<div style="left:693px;top:1348px;width:1034px;height:2px;background:#dde0e6;"></div>
<div style="left:1162px;top:1300px;width:2px;height:48px;background:#dde0e6;"></div>
<div style="left:1319px;top:1300px;width:2px;height:48px;background:#dde0e6;"></div>
<div style="left:1483px;top:1300px;width:2px;height:48px;background:#dde0e6;"></div>
<div style="left:1727px;top:1300px;width:2px;height:50px;background:#dde0e6;"></div>
<span class="t" style="left:709.00px;top:1311.28px;font-size:24px;line-height:26.808px;color:#222222;font-weight:400;font-family:'Liberation Sans', sans-serif;">3</span>
<span class="t" style="left:798.50px;top:1311.28px;font-size:24px;line-height:26.808px;color:#222222;font-weight:400;font-family:'Liberation Sans', sans-serif;">2025-02-09 20:19:14.367485</span>
<span class="t" style="left:1180.20px;top:1311.28px;font-size:24px;line-height:26.808px;color:#222222;font-weight:400;font-family:'Liberation Sans', sans-serif;">tag</span>
<span class="t" style="left:1336.50px;top:1311.28px;font-size:24px;line-height:26.808px;color:#222222;font-weight:400;font-family:'Liberation Sans', sans-serif;transform:scaleX(1.0581);transform-origin:0 0;">leaf/publish</span>
<span class="t" style="left:1694.50px;top:1311.28px;font-size:24px;line-height:26.808px;color:#222222;font-weight:400;font-family:'Liberation Sans', sans-serif;">1</span>
<div style="left:782px;top:1350px;width:945px;height:48px;background:#fff;"></div>
<div style="left:693px;top:1398px;width:1034px;height:2px;background:#dde0e6;"></div>
<div style="left:1162px;top:1350px;width:2px;height:48px;background:#dde0e6;"></div>
<div style="left:1319px;top:1350px;width:2px;height:48px;background:#dde0e6;"></div>
<div style="left:1483px;top:1350px;width:2px;height:48px;background:#dde0e6;"></div>
<div style="left:1727px;top:1350px;width:2px;height:50px;background:#dde0e6;"></div>
<span class="t" style="left:709.00px;top:1361.28px;font-size:24px;line-height:26.808px;color:#222222;font-weight:400;font-family:'Liberation Sans', sans-serif;">4</span>
<span class="t" style="left:798.50px;top:1361.28px;font-size:24px;line-height:26.808px;color:#222222;font-weight:400;font-family:'Liberation Sans', sans-serif;">2025-02-09 20:19:15.369556</span>
<span class="t" style="left:1180.20px;top:1361.28px;font-size:24px;line-height:26.808px;color:#222222;font-weight:400;font-family:'Liberation Sans', sans-serif;">tag</span>
<span class="t" style="left:1336.50px;top:1361.28px;font-size:24px;line-height:26.808px;color:#222222;font-weight:400;font-family:'Liberation Sans', sans-serif;transform:scaleX(1.0581);transform-origin:0 0;">leaf/publish</span>
<span class="t" style="left:1694.50px;top:1361.28px;font-size:24px;line-height:26.808px;color:#222222;font-weight:400;font-family:'Liberation Sans', sans-serif;">1</span>
<div style="left:782px;top:1400px;width:945px;height:48px;background:#ebeef3;"></div>
<div style="left:693px;top:1448px;width:1034px;height:2px;background:#dde0e6;"></div>
<div style="left:1162px;top:1400px;width:2px;height:48px;background:#dde0e6;"></div>
<div style="left:1319px;top:1400px;width:2px;height:48px;background:#dde0e6;"></div>
<div style="left:1483px;top:1400px;width:2px;height:48px;background:#dde0e6;"></div>
<div style="left:1727px;top:1400px;width:2px;height:50px;background:#dde0e6;"></div>
<span class="t" style="left:709.00px;top:1411.28px;font-size:24px;line-height:26.808px;color:#222222;font-weight:400;font-family:'Liberation Sans', sans-serif;">5</span>
<span class="t" style="left:798.50px;top:1411.28px;font-size:24px;line-height:26.808px;color:#222222;font-weight:400;font-family:'Liberation Sans', sans-serif;">2025-02-09 20:19:16.374017</span>
<span class="t" style="left:1180.20px;top:1411.28px;font-size:24px;line-height:26.808px;color:#222222;font-weight:400;font-family:'Liberation Sans', sans-serif;">tag</span>
<span class="t" style="left:1336.50px;top:1411.28px;font-size:24px;line-height:26.808px;color:#222222;font-weight:400;font-family:'Liberation Sans', sans-serif;transform:scaleX(1.0581);transform-origin:0 0;">leaf/publish</span>
<span class="t" style="left:1694.50px;top:1411.28px;font-size:24px;line-height:26.808px;color:#222222;font-weight:400;font-family:'Liberation Sans', sans-serif;">1</span>
<div style="left:782px;top:1450px;width:945px;height:48px;background:#fff;"></div>
<div style="left:693px;top:1498px;width:1034px;height:2px;background:#dde0e6;"></div>
<div style="left:1162px;top:1450px;width:2px;height:48px;background:#dde0e6;"></div>
<div style="left:1319px;top:1450px;width:2px;height:48px;background:#dde0e6;"></div>
<div style="left:1483px;top:1450px;width:2px;height:48px;background:#dde0e6;"></div>
<div style="left:1727px;top:1450px;width:2px;height:50px;background:#dde0e6;"></div>
<span class="t" style="left:709.00px;top:1461.28px;font-size:24px;line-height:26.808px;color:#222222;font-weight:400;font-family:'Liberation Sans', sans-serif;">6</span>
<span class="t" style="left:798.50px;top:1461.28px;font-size:24px;line-height:26.808px;color:#222222;font-weight:400;font-family:'Liberation Sans', sans-serif;">2025-02-09 20:19:17.377036</span>
<span class="t" style="left:1180.20px;top:1461.28px;font-size:24px;line-height:26.808px;color:#222222;font-weight:400;font-family:'Liberation Sans', sans-serif;">tag</span>
<span class="t" style="left:1336.50px;top:1461.28px;font-size:24px;line-height:26.808px;color:#222222;font-weight:400;font-family:'Liberation Sans', sans-serif;transform:scaleX(1.0581);transform-origin:0 0;">leaf/publish</span>
<span class="t" style="left:1694.50px;top:1461.28px;font-size:24px;line-height:26.808px;color:#222222;font-weight:400;font-family:'Liberation Sans', sans-serif;">1</span>
<div style="left:782px;top:1500px;width:945px;height:48px;background:#ebeef3;"></div>
<div style="left:693px;top:1548px;width:1034px;height:2px;background:#dde0e6;"></div>
<div style="left:1162px;top:1500px;width:2px;height:48px;background:#dde0e6;"></div>
<div style="left:1319px;top:1500px;width:2px;height:48px;background:#dde0e6;"></div>
<div style="left:1483px;top:1500px;width:2px;height:48px;background:#dde0e6;"></div>
<div style="left:1727px;top:1500px;width:2px;height:50px;background:#dde0e6;"></div>
<span class="t" style="left:709.00px;top:1511.28px;font-size:24px;line-height:26.808px;color:#222222;font-weight:400;font-family:'Liberation Sans', sans-serif;">7</span>
<span class="t" style="left:798.50px;top:1511.28px;font-size:24px;line-height:26.808px;color:#222222;font-weight:400;font-family:'Liberation Sans', sans-serif;">2025-02-09 20:19:18.380842</span>
<span class="t" style="left:1180.20px;top:1511.28px;font-size:24px;line-height:26.808px;color:#222222;font-weight:400;font-family:'Liberation Sans', sans-serif;">tag</span>
<span class="t" style="left:1336.50px;top:1511.28px;font-size:24px;line-height:26.808px;color:#222222;font-weight:400;font-family:'Liberation Sans', sans-serif;transform:scaleX(1.0581);transform-origin:0 0;">leaf/publish</span>
<span class="t" style="left:1694.50px;top:1511.28px;font-size:24px;line-height:26.808px;color:#222222;font-weight:400;font-family:'Liberation Sans', sans-serif;">1</span>
<div style="left:782px;top:1550px;width:945px;height:48px;background:#fff;"></div>
<div style="left:693px;top:1598px;width:1034px;height:2px;background:#dde0e6;"></div>
<div style="left:1162px;top:1550px;width:2px;height:48px;background:#dde0e6;"></div>
<div style="left:1319px;top:1550px;width:2px;height:48px;background:#dde0e6;"></div>
<div style="left:1483px;top:1550px;width:2px;height:48px;background:#dde0e6;"></div>
<div style="left:1727px;top:1550px;width:2px;height:50px;background:#dde0e6;"></div>
<span class="t" style="left:709.00px;top:1561.28px;font-size:24px;line-height:26.808px;color:#222222;font-weight:400;font-family:'Liberation Sans', sans-serif;">8</span>
<span class="t" style="left:798.50px;top:1561.28px;font-size:24px;line-height:26.808px;color:#222222;font-weight:400;font-family:'Liberation Sans', sans-serif;">2025-02-09 20:19:19.384911</span>
<span class="t" style="left:1180.20px;top:1561.28px;font-size:24px;line-height:26.808px;color:#222222;font-weight:400;font-family:'Liberation Sans', sans-serif;">tag</span>
<span class="t" style="left:1336.50px;top:1561.28px;font-size:24px;line-height:26.808px;color:#222222;font-weight:400;font-family:'Liberation Sans', sans-serif;transform:scaleX(1.0581);transform-origin:0 0;">leaf/publish</span>
<span class="t" style="left:1694.50px;top:1561.28px;font-size:24px;line-height:26.808px;color:#222222;font-weight:400;font-family:'Liberation Sans', sans-serif;">1</span>
<div style="left:782px;top:1600px;width:945px;height:48px;background:#ebeef3;"></div>
<div style="left:693px;top:1648px;width:1034px;height:2px;background:#dde0e6;"></div>
<div style="left:1162px;top:1600px;width:2px;height:48px;background:#dde0e6;"></div>
<div style="left:1319px;top:1600px;width:2px;height:48px;background:#dde0e6;"></div>
<div style="left:1483px;top:1600px;width:2px;height:48px;background:#dde0e6;"></div>
<div style="left:1727px;top:1600px;width:2px;height:50px;background:#dde0e6;"></div>
<span class="t" style="left:709.00px;top:1611.28px;font-size:24px;line-height:26.808px;color:#222222;font-weight:400;font-family:'Liberation Sans', sans-serif;">9</span>
<span class="t" style="left:798.50px;top:1611.28px;font-size:24px;line-height:26.808px;color:#222222;font-weight:400;font-family:'Liberation Sans', sans-serif;">2025-02-09 20:19:20.389724</span>
<span class="t" style="left:1180.20px;top:1611.28px;font-size:24px;line-height:26.808px;color:#222222;font-weight:400;font-family:'Liberation Sans', sans-serif;">tag</span>
<span class="t" style="left:1336.50px;top:1611.28px;font-size:24px;line-height:26.808px;color:#222222;font-weight:400;font-family:'Liberation Sans', sans-serif;transform:scaleX(1.0581);transform-origin:0 0;">leaf/publish</span>
<span class="t" style="left:1694.50px;top:1611.28px;font-size:24px;line-height:26.808px;color:#222222;font-weight:400;font-family:'Liberation Sans', sans-serif;">1</span>
<div style="left:782px;top:1650px;width:945px;height:48px;background:#fff;"></div>
<div style="left:693px;top:1698px;width:1034px;height:2px;background:#dde0e6;"></div>
<div style="left:1162px;top:1650px;width:2px;height:48px;background:#dde0e6;"></div>
<div style="left:1319px;top:1650px;width:2px;height:48px;background:#dde0e6;"></div>
<div style="left:1483px;top:1650px;width:2px;height:48px;background:#dde0e6;"></div>
<div style="left:1727px;top:1650px;width:2px;height:50px;background:#dde0e6;"></div>
<span class="t" style="left:709.00px;top:1661.28px;font-size:24px;line-height:26.808px;color:#222222;font-weight:400;font-family:'Liberation Sans', sans-serif;">10</span>
<span class="t" style="left:798.50px;top:1661.28px;font-size:24px;line-height:26.808px;color:#222222;font-weight:400;font-family:'Liberation Sans', sans-serif;">2025-02-09 20:19:21.393534</span>
<span class="t" style="left:1180.20px;top:1661.28px;font-size:24px;line-height:26.808px;color:#222222;font-weight:400;font-family:'Liberation Sans', sans-serif;">tag</span>
<span class="t" style="left:1336.50px;top:1661.28px;font-size:24px;line-height:26.808px;color:#222222;font-weight:400;font-family:'Liberation Sans', sans-serif;transform:scaleX(1.0581);transform-origin:0 0;">leaf/publish</span>
<span class="t" style="left:1694.50px;top:1661.28px;font-size:24px;line-height:26.808px;color:#222222;font-weight:400;font-family:'Liberation Sans', sans-serif;">1</span>
<div style="left:658px;top:122px;width:32px;height:1590px;background:#f1f2f5;"></div>
<div style="left:666px;top:460px;width:16px;height:1260px;background:#c9cdd6;border-radius:8px;"></div>
<svg style="left:442.4px;top:68.1px;overflow:visible;" width="45" height="44" viewBox="0 0 45 44"><ellipse cx="21.35" cy="12" rx="12.95" ry="5.4" fill="#222222"/><path d="M8.4,17.4 Q13.5,20.6 21.9,20.8 V26.8 Q12.5,26.6 8.4,23.3 Z" fill="#222222"/><path d="M8.4,26.4 Q13,29.3 21.9,29.7 V35.8 Q12.5,35.6 8.4,32.3 Z" fill="#222222"/><path d="M25.4,19.6 Q31,18.8 34.2,17 V24.1 Z" fill="#222222"/><path d="M23.7,23 Q23.7,21.6 25,22.3 L36.8,29 Q38.2,29.9 36.8,30.7 L25,37.1 Q23.7,37.8 23.7,36.4 Z" fill="#222222"/></svg>
<svg style="left:507.9px;top:75.9px;overflow:visible;" width="32.0" height="27.0" viewBox="0 0 32 27"><rect x="1" y="1" width="30" height="25" rx="3" fill="none" stroke="#222222" stroke-width="2.2"/><rect x="1" y="1" width="30" height="5" rx="2" fill="#222222"/><line x1="1" y1="12.5" x2="31" y2="12.5" stroke="#222222" stroke-width="2"/><line x1="1" y1="19" x2="31" y2="19" stroke="#222222" stroke-width="2"/><line x1="11" y1="5" x2="11" y2="26" stroke="#222222" stroke-width="2"/><line x1="21" y1="5" x2="21" y2="26" stroke="#222222" stroke-width="2"/></svg>
<svg style="left:565.9px;top:77.9px;overflow:visible;" width="32.0" height="23.8" viewBox="0 0 32 24"><path d="M0.5,0 H25 L20,5.5 H13 L10.5,8.5 V24 L9,23 V11 Z" fill="#222222"/><rect x="15" y="9" width="17" height="15" rx="2" fill="#222222"/><rect x="17.5" y="12.5" width="5.2" height="4" fill="#fff"/><rect x="24.2" y="12.5" width="5.2" height="4" fill="#fff"/><rect x="17.5" y="18" width="5.2" height="3.8" fill="#fff"/><rect x="24.2" y="18" width="5.2" height="3.8" fill="#fff"/></svg>
<svg style="left:623px;top:73.7px;overflow:visible;" width="33" height="32.4" viewBox="0 0 33 33"><circle cx="12" cy="12" r="10" fill="none" stroke="#222222" stroke-width="3.8"/><line x1="19.5" y1="19.5" x2="31" y2="31" stroke="#222222" stroke-width="3.8"/></svg>
<svg style="left:2062.9px;top:79px;overflow:visible;" width="31.4" height="26.6" viewBox="0 0 32 27"><rect x="1" y="1" width="30" height="25" rx="3" fill="none" stroke="#222222" stroke-width="2.2"/><rect x="1" y="1" width="30" height="5" rx="2" fill="#222222"/><line x1="1" y1="12.5" x2="31" y2="12.5" stroke="#222222" stroke-width="2"/><line x1="1" y1="19" x2="31" y2="19" stroke="#222222" stroke-width="2"/><line x1="11" y1="5" x2="11" y2="26" stroke="#222222" stroke-width="2"/><line x1="21" y1="5" x2="21" y2="26" stroke="#222222" stroke-width="2"/></svg>
<svg style="left:2422.5px;top:79px;overflow:visible;" width="32.2" height="26.6" viewBox="0 0 32 27"><rect x="1" y="1" width="30" height="25" rx="3" fill="none" stroke="#3d6590" stroke-width="2.2"/><rect x="1" y="1" width="30" height="5" rx="2" fill="#3d6590"/><line x1="1" y1="12.5" x2="31" y2="12.5" stroke="#3d6590" stroke-width="2"/><line x1="1" y1="19" x2="31" y2="19" stroke="#3d6590" stroke-width="2"/><line x1="11" y1="5" x2="11" y2="26" stroke="#3d6590" stroke-width="2"/><line x1="21" y1="5" x2="21" y2="26" stroke="#3d6590" stroke-width="2"/></svg>
<svg style="left:712px;top:133px;overflow:visible;" width="44" height="42" viewBox="0 0 44 42"><g transform="translate(26.25,16.5) rotate(45)"><path d="M-9.5,0 H9.5 M6.8,0 V-3.5 A6.8,6.5 0 0 0 -6.8,-3.5 V0 M0,-10 V-15.5 M-4.3,0 V5 M4.3,0 V5" fill="none" stroke="#222222" stroke-width="2.3"/></g><g transform="translate(17.75,25.05) rotate(45)"><path d="M-9.5,0 H9.5 M6.8,0 V3.5 A6.8,6.5 0 0 1 -6.8,3.5 V0 M0,10 V15.5" fill="none" stroke="#222222" stroke-width="2.3"/></g></svg>
<svg style="left:1674.5px;top:131.7px;overflow:visible;" width="45" height="44" viewBox="0 0 45 44"><ellipse cx="21.35" cy="12" rx="12.95" ry="5.4" fill="#222222"/><path d="M8.4,17.4 Q13.5,20.6 21.9,20.8 V26.8 Q12.5,26.6 8.4,23.3 Z" fill="#222222"/><path d="M8.4,26.4 Q13,29.3 21.9,29.7 V35.8 Q12.5,35.6 8.4,32.3 Z" fill="#222222"/><path d="M25.4,19.6 Q31,18.8 34.2,17 V24.1 Z" fill="#222222"/><path d="M23.7,23 Q23.7,21.6 25,22.3 L36.8,29 Q38.2,29.9 36.8,30.7 L25,37.1 Q23.7,37.8 23.7,36.4 Z" fill="#222222"/></svg>
<svg style="left:717.8px;top:208px;overflow:visible;" width="32.2" height="25.9" viewBox="0 0 32 26"><path d="M0,3 Q0,0 3,0 H11 L14,3 H29 Q32,3 32,6 V23 Q32,26 29,26 H3 Q0,26 0,23z" fill="#737478"/></svg>
<svg style="left:785px;top:206.6px;overflow:visible;" width="29.6" height="29.2" viewBox="0 0 30 30"><path d="M0,3 Q0,0 3,0 H23 L30,7 V27 Q30,30 27,30 H3 Q0,30 0,27z" fill="#737478"/><rect x="4" y="4" width="17" height="6" rx="3" fill="#f6f7f9"/><circle cx="15" cy="21" r="4.2" fill="#f6f7f9"/></svg>
<svg style="left:842px;top:216px;overflow:visible;" width="19.4" height="11.5" viewBox="0 0 20 11.5"><polyline points="1.5,1.5 10,10 18.5,1.5" fill="none" stroke="#737478" stroke-width="2.8"/></svg>
<svg style="left:899px;top:207px;overflow:visible;" width="29" height="28.5" viewBox="0 0 29 29"><path d="M0,24 L1,28.5 L5,28.5 L22,11.5 L17,6.5 L1,22.5z" fill="#737478"/><path d="M19,4.5 L22.5,1 Q23.5,0 24.5,1 L28,4.5 Q29,5.5 28,6.5 L24.5,10z" fill="#737478"/></svg>
<svg style="left:932.9px;top:216px;overflow:visible;" width="18.1" height="11.5" viewBox="0 0 20 11.5"><polyline points="1.5,1.5 10,10 18.5,1.5" fill="none" stroke="#737478" stroke-width="2.8"/></svg>
<svg style="left:1005px;top:208px;overflow:visible;" width="26" height="26" viewBox="0 0 26 26"><path d="M1,0 H25 Q26.5,0 25.5,1.5 L16,12 V24 Q16,26 13,26 Q10,26 10,24 V12 L0.5,1.5 Q-0.5,0 1,0z" fill="#222222"/></svg>
<svg style="left:1060.6px;top:216px;overflow:visible;" width="18.6" height="11.5" viewBox="0 0 20 11.5"><polyline points="1.5,1.5 10,10 18.5,1.5" fill="none" stroke="#222222" stroke-width="2.8"/></svg>
<svg style="left:1349.8px;top:209.7px;overflow:visible;" width="24.3" height="24.2" viewBox="0 0 24 24"><rect x="0" y="0" width="24" height="24" rx="5" fill="#737478"/></svg>
<svg style="left:1419.7px;top:209.3px;overflow:visible;" width="20.6" height="25.4" viewBox="0 0 21 25"><path d="M1.5,0.5 Q0,0 0,2 V23 Q0,25 1.5,24.5 L19.5,14 Q21,12.7 19.5,11.3z" fill="#222222"/></svg>
<svg style="left:1482.9px;top:207.7px;overflow:visible;" width="23.8" height="26.5" viewBox="0 0 24 27"><path d="M1.5,0.5 Q0,0 0,2 V24.5 Q0,27 2,26 L23,14.5 Q24.5,13.3 23,12z" fill="#737478"/><path d="M6,17 L11.5,13.5 H14 V27 H10.5 V17.5 L7,19.5z" fill="#737478" stroke="#f6f7f9" stroke-width="1.6"/></svg>
<svg style="left:1536.8px;top:216px;overflow:visible;" width="18.8" height="11.5" viewBox="0 0 20 11.5"><polyline points="1.5,1.5 10,10 18.5,1.5" fill="none" stroke="#737478" stroke-width="2.8"/></svg>
<svg style="left:1593.7px;top:206.9px;overflow:visible;" width="28.8" height="28.6" viewBox="0 0 29 29"><rect x="0" y="0" width="29" height="29" rx="4" fill="#737478"/><path d="M9.5,7 H20 V10.5 H13 V13 H19 V16.5 H13 V19 H20 V22.5 H9.5z" fill="#f6f7f9"/></svg>
<svg style="left:1659.8px;top:206.9px;overflow:visible;" width="28.6" height="28.6" viewBox="0 0 29 29"><rect x="0" y="0" width="29" height="29" rx="4" fill="#737478"/><rect x="7" y="12" width="3" height="10" rx="1.5" fill="#f6f7f9"/><rect x="13" y="7" width="3" height="15" rx="1.5" fill="#f6f7f9"/><rect x="19" y="16" width="3" height="6" rx="1.5" fill="#f6f7f9"/></svg>
<svg style="left:1717px;top:216px;overflow:visible;" width="18.2" height="11.5" viewBox="0 0 20 11.5"><polyline points="1.5,1.5 10,10 18.5,1.5" fill="none" stroke="#737478" stroke-width="2.8"/></svg>
<svg style="left:1770.5px;top:204.7px;overflow:visible;" width="34.3" height="32.9" viewBox="0 0 34.5 34"><ellipse cx="14" cy="5" rx="14" ry="5" fill="#737478"/><path d="M0,9 Q14,15 28,9 V12 Q22,14 16,15 Q13,16 13,18 Q5,17 0,14z" fill="#737478"/><path d="M0,18 Q5,21 12,22 Q12,24 13,26 Q5,25 0,22.5z" fill="#737478"/><circle cx="24.5" cy="24" r="10" fill="#737478" stroke="#f6f7f9" stroke-width="1.8"/><polyline points="19.5,24 23,27.5 29.5,21" fill="none" stroke="#f6f7f9" stroke-width="2.6"/></svg>
<svg style="left:1836.8px;top:204.7px;overflow:visible;" width="34.2" height="32.9" viewBox="0 0 34.5 34"><ellipse cx="14" cy="5" rx="14" ry="5" fill="#737478"/><path d="M0,9 Q14,15 28,9 V12 Q22,14 16,15 Q13,16 13,18 Q5,17 0,14z" fill="#737478"/><path d="M0,18 Q5,21 12,22 Q12,24 13,26 Q5,25 0,22.5z" fill="#737478"/><circle cx="24.5" cy="24" r="10" fill="#737478" stroke="#f6f7f9" stroke-width="1.8"/><path d="M20,22.5 H26 Q29.5,22.5 29.5,26 V29" fill="none" stroke="#f6f7f9" stroke-width="2.6"/><path d="M18.5,22.5 L23,18.5 V26.5z" fill="#f6f7f9"/></svg>
<svg style="left:1913px;top:206px;overflow:visible;" width="30.8" height="30" viewBox="0 0 31 30"><text x="0" y="8" font-family="Liberation Sans" font-weight="700" font-size="8.5" fill="#737478">1</text><text x="0" y="18" font-family="Liberation Sans" font-weight="700" font-size="8.5" fill="#737478">2</text><text x="0" y="28" font-family="Liberation Sans" font-weight="700" font-size="8.5" fill="#737478">3</text><rect x="9" y="4" width="22" height="3" rx="1.5" fill="#737478"/><rect x="9" y="14" width="22" height="3" rx="1.5" fill="#737478"/><rect x="9" y="24" width="22" height="3" rx="1.5" fill="#737478"/></svg>
<svg style="left:1948.6px;top:216px;overflow:visible;" width="18.4" height="11.5" viewBox="0 0 20 11.5"><polyline points="1.5,1.5 10,10 18.5,1.5" fill="none" stroke="#737478" stroke-width="2.8"/></svg>
<svg style="left:2017.7px;top:204.7px;overflow:visible;" width="32.4" height="32.3" viewBox="0 0 32 32"><circle cx="16" cy="16" r="16" fill="#222222"/><path d="M10.5,12 Q10.5,6.5 16,6.5 Q21.5,6.5 21.5,11.5 Q21.5,14.5 18.5,16 Q17.5,16.7 17.5,18 V19.5 H14 V17.5 Q14,14.5 16.5,13.5 Q18,12.8 18,11.5 Q18,9.8 16,9.8 Q14,9.8 14,12z" fill="#fff"/><rect x="14" y="22" width="3.5" height="3.5" fill="#fff"/></svg>
<svg style="left:2643.9px;top:276.2px;overflow:visible;" width="25.6" height="25.5" viewBox="0 0 26 26"><line x1="4" y1="22" x2="22" y2="4" stroke="#222222" stroke-width="3"/><path d="M14,0 H26 V12z" fill="#222222"/><path d="M0,14 V26 H12z" fill="#222222"/></svg>
<svg style="left:710px;top:1074.4px;overflow:visible;" width="40" height="26.6" viewBox="0 0 38 27"><rect x="0" y="0" width="26" height="4" rx="2" fill="#737478"/><rect x="0" y="7.5" width="26" height="4" rx="2" fill="#737478"/><rect x="0" y="15" width="17" height="4" rx="2" fill="#737478"/><rect x="26" y="8" width="4" height="19" rx="2" fill="#737478"/><rect x="18.5" y="15" width="19" height="4" rx="2" fill="#737478"/></svg>
<svg style="left:780px;top:1067.8px;overflow:visible;" width="30" height="35.1" viewBox="0 0 30 35"><path d="M2,28 V4 Q2,1.5 4.5,1.5 H22" fill="none" stroke="#737478" stroke-width="3" stroke-linecap="round"/><path d="M8,9 Q8,6 11,6 H20 L29,15 V32 Q29,35 26,35 H11 Q8,35 8,32z" fill="#737478"/><path d="M20,6.5 V15 H28.5" fill="#f6f7f9"/></svg>
<svg style="left:838.9px;top:1080px;overflow:visible;" width="18.2" height="11.1" viewBox="0 0 20 11.5"><polyline points="1.5,1.5 10,10 18.5,1.5" fill="none" stroke="#222222" stroke-width="2.8"/></svg>
<svg style="left:885.6px;top:1066.2px;overflow:visible;" width="28.4" height="34.2" viewBox="0 0 28 34"><rect x="1.5" y="4" width="25" height="28.5" rx="2.5" fill="none" stroke="#737478" stroke-width="3"/><path d="M8,1.5 H11 Q11,-0.5 14,-0.5 Q17,-0.5 17,1.5 H20 V7 H8z" fill="#737478"/></svg>
<svg style="left:942.9px;top:1080px;overflow:visible;" width="18.2" height="11.1" viewBox="0 0 20 11.5"><polyline points="1.5,1.5 10,10 18.5,1.5" fill="none" stroke="#222222" stroke-width="2.8"/></svg>
<svg style="left:992.7px;top:1070.7px;overflow:visible;" width="22.2" height="28.9" viewBox="0 0 22 29"><rect x="0" y="2.5" width="22" height="3" rx="1.5" fill="#737478"/><rect x="7" y="0" width="8" height="3" rx="1" fill="#737478"/><path d="M2,7.5 H20 V26 Q20,29 17,29 H5 Q2,29 2,26z" fill="#737478"/></svg>
<svg style="left:1066.5px;top:1071.2px;overflow:visible;" width="26.8" height="29.5" viewBox="0 0 26.5 30"><ellipse cx="12" cy="5" rx="12" ry="5" fill="#737478"/><path d="M0,9 Q12,15 24,9 V12.5 Q20,13.5 16,14 Q11,14.5 10.5,19 V18.5 Q4,17.5 0,15z" fill="#737478"/><path d="M0,19.5 Q4,22 10.5,22.5 V27 Q4,26.5 0,24z" fill="#737478"/><path d="M11,17.5 Q11,15 13.5,15 H23 L26.5,18.5 V28 Q26.5,30 24.5,30 H13.5 Q11,30 11,27.5z" fill="#737478" stroke="#f6f7f9" stroke-width="1.2"/><rect x="14.5" y="17.5" width="9" height="4" fill="#f6f7f9"/><circle cx="19" cy="25.5" r="2" fill="#f6f7f9"/></svg>
<svg style="left:1145.2px;top:1070.7px;overflow:visible;" width="21.9" height="27.2" viewBox="0 0 22 27.5"><path d="M7,1 Q7,0 8,0 H14 Q15,0 15,1 V10 H19.5 Q21,10.5 20,12 L11,21 L2,12 Q1,10.5 2.5,10 H7z" fill="#222222"/><rect x="0" y="24" width="22" height="3.4" rx="1.7" fill="#222222"/></svg>
<svg style="left:1214.3px;top:1075.5px;overflow:visible;" width="35.2" height="19.5" viewBox="0 0 35 19"><polyline points="3,15.5 14.5,4 22.5,12.5 32,3" fill="none" stroke="#222222" stroke-width="3.2" stroke-linejoin="round"/><circle cx="3" cy="15.5" r="3" fill="#222222"/><circle cx="14.5" cy="4" r="3" fill="#222222"/><circle cx="22.5" cy="12.5" r="3" fill="#222222"/><circle cx="32" cy="3" r="3" fill="#222222"/></svg>
<svg style="left:2729px;top:1070.5px;overflow:visible;" width="29" height="28.4" viewBox="0 0 29 29"><path d="M0,24 L1,28.5 L5,28.5 L22,11.5 L17,6.5 L1,22.5z" fill="#222222"/><path d="M19,4.5 L22.5,1 Q23.5,0 24.5,1 L28,4.5 Q29,5.5 28,6.5 L24.5,10z" fill="#222222"/></svg></div></body></html>
